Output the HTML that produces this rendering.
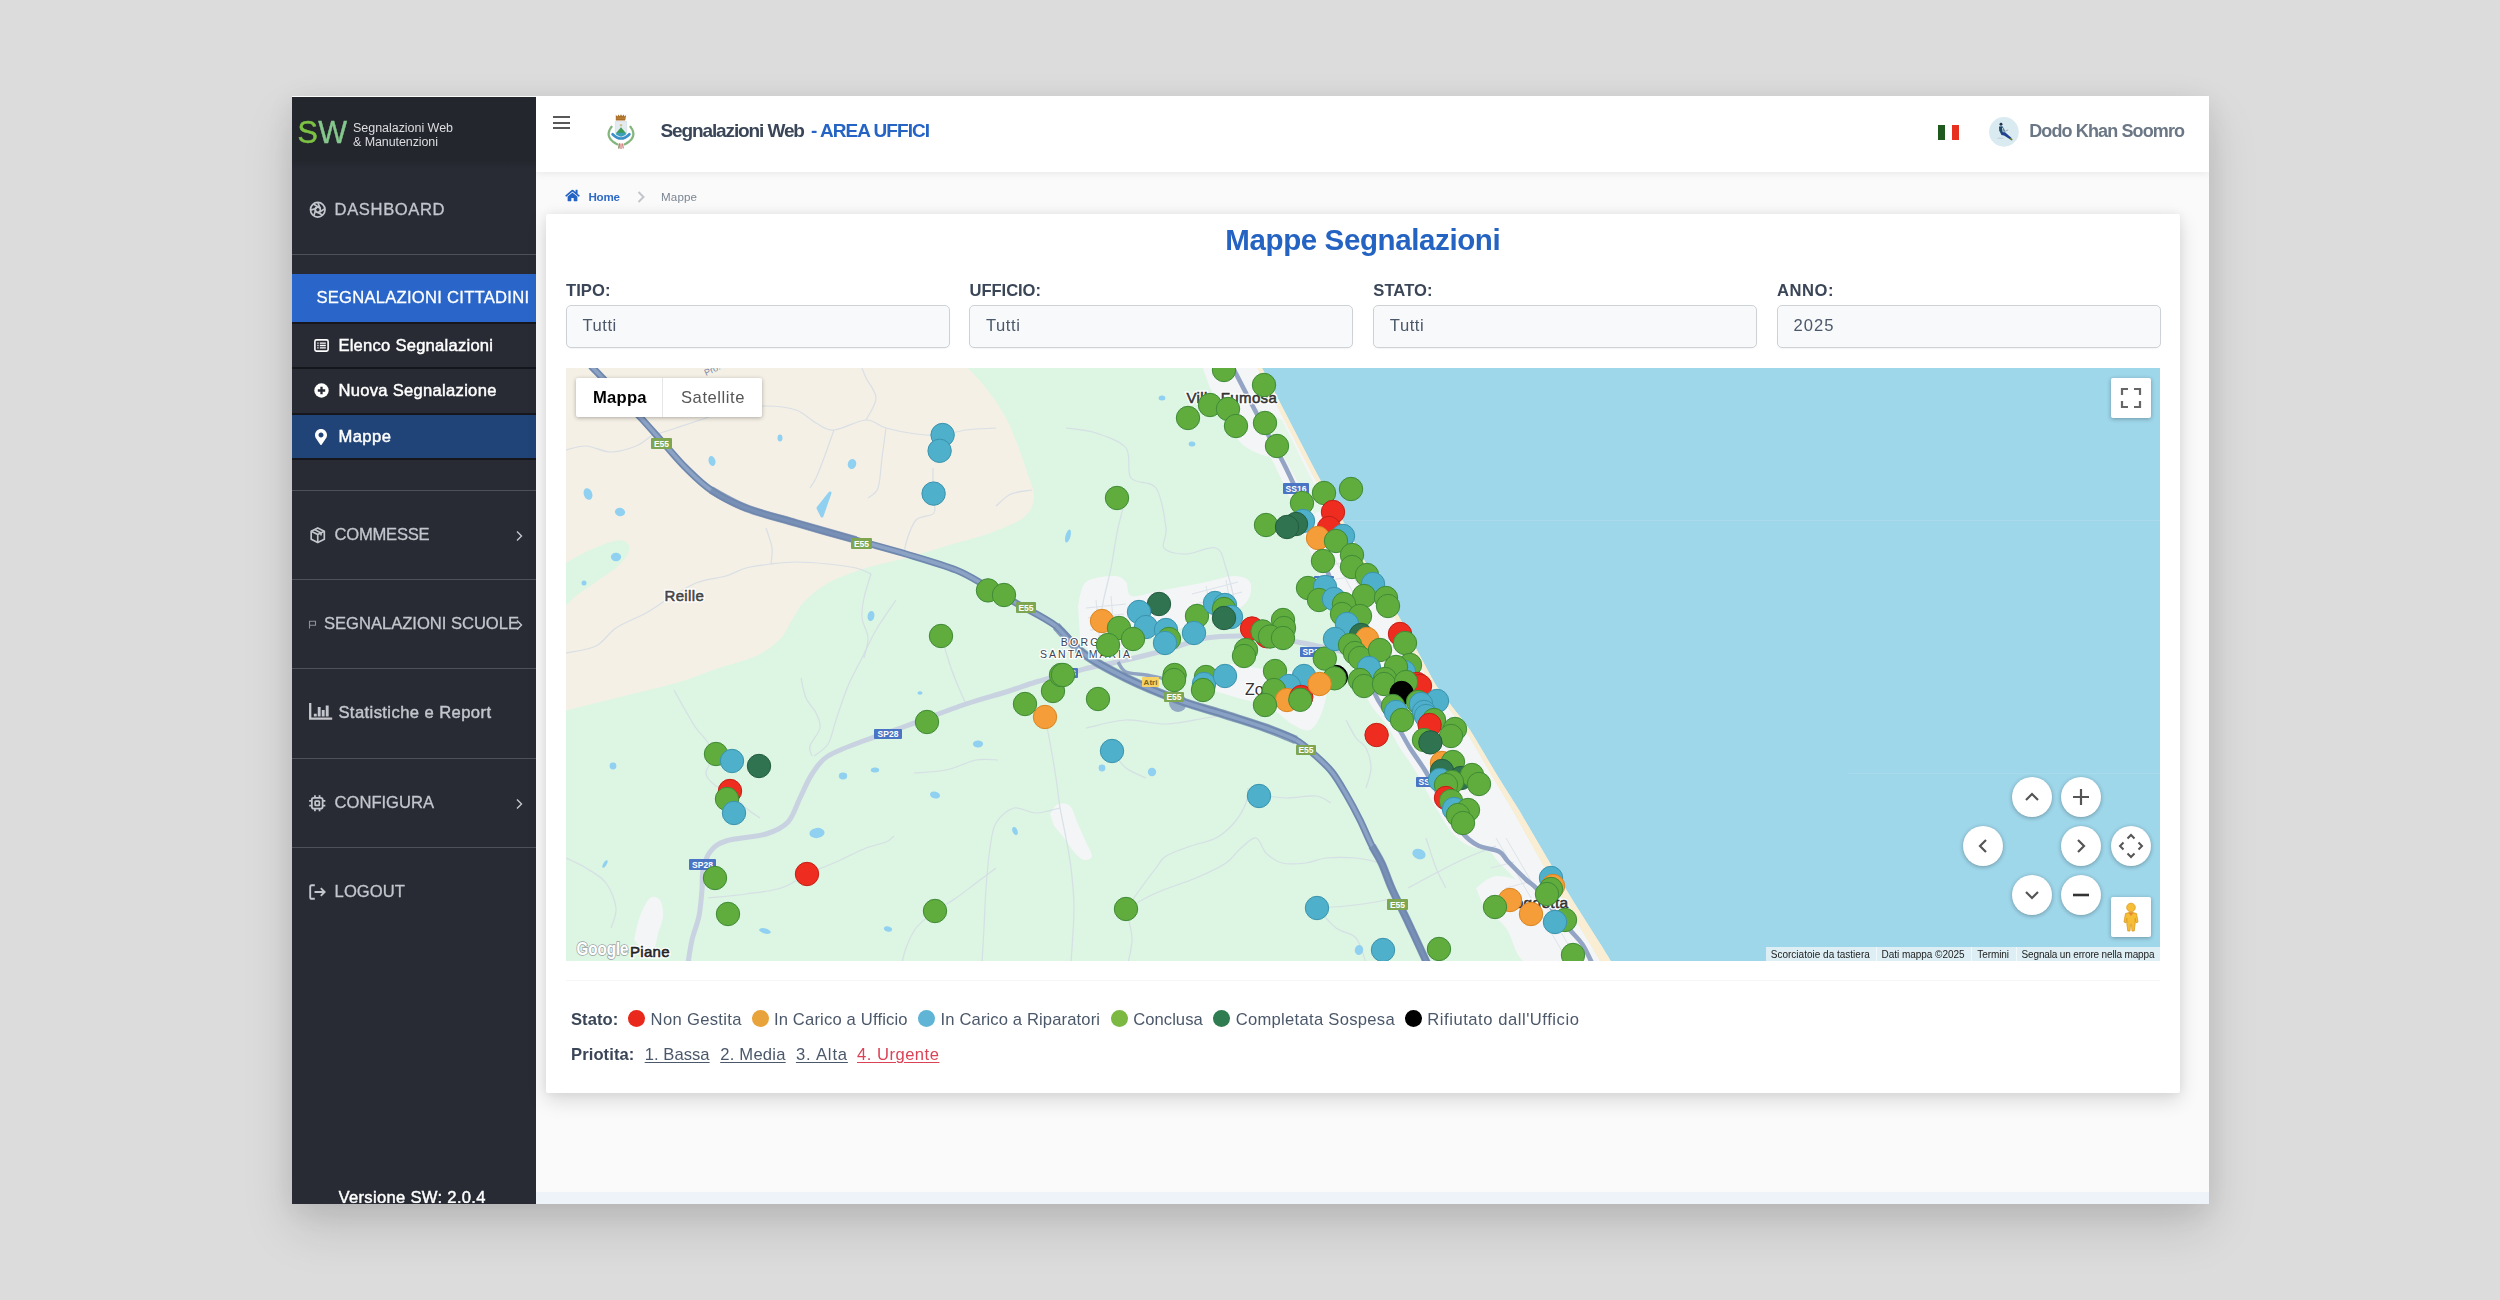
<!DOCTYPE html>
<html lang="it"><head><meta charset="utf-8"><title>Mappe Segnalazioni</title>
<style>
html,body{margin:0;padding:0}
body{width:2500px;height:1300px;overflow:hidden;background:#dcdcdc;font-family:"Liberation Sans",sans-serif;position:relative}
.a{position:absolute}
.t{position:absolute;white-space:pre;font-family:"Liberation Sans",sans-serif}
#win{left:292px;top:96px;width:1917px;height:1108px;background:#fafafa;box-shadow:0 24px 48px rgba(0,0,0,.135),0 6px 26px rgba(0,0,0,.075);overflow:hidden}
#side{left:0;top:1px;width:244px;height:1107px;background:#282b34}
#logo{left:0;top:0;width:244px;height:72px;background:linear-gradient(#24262e 0,#24262e 88%,#282b34 100%)}
.sep{left:0;width:244px;height:1px;background:#4e515a}
.dsep{left:0;width:244px;height:2px;background:#15171c}
#hdr{left:244px;top:0;width:1673px;height:76px;background:#fff;box-shadow:0 1px 8px rgba(0,0,0,.08)}
#card{left:254px;top:118px;width:1634px;height:879px;background:#fff;box-shadow:0 7px 20px rgba(0,0,0,.14),0 0 10px rgba(0,0,0,.06);border-radius:2px}
.inp{top:209px;width:382px;height:41px;background:#f8f9fa;border:1px solid #cdd2d7;border-radius:5px;box-shadow:0 1px 1px rgba(0,0,0,.04)}
#foot{left:244px;top:1096px;width:1673px;height:12px;background:#edf3f8}
.dot{position:absolute;width:17px;height:17px;border-radius:50%;top:1010px}
.u{text-decoration:underline;text-underline-offset:2px;text-decoration-thickness:1px}
.gbtn{position:absolute;width:40px;height:40px;border-radius:50%;background:#fff;box-shadow:0 1px 4px rgba(0,0,0,.3)}
.gbox{position:absolute;width:40px;height:40px;border-radius:2px;background:#fff;box-shadow:0 1px 4px rgba(0,0,0,.3)}
</style></head><body>
<div id="win" class="a">
  <div id="hdr" class="a"></div>
  <div id="side" class="a">
    <div id="logo" class="a"></div>
    <div class="a sep" style="top:157px"></div>
    <div class="a" style="left:0;top:177px;width:244px;height:49px;background:#2a66c9"></div>
    <div class="a dsep" style="top:225px"></div>
    <div class="a dsep" style="top:270px"></div>
    <div class="a dsep" style="top:316px"></div>
    <div class="a" style="left:0;top:318px;width:244px;height:44px;background:#214478"></div>
    <div class="a dsep" style="top:361px"></div>
    <div class="a sep" style="top:393px"></div>
    <div class="a sep" style="top:482px"></div>
    <div class="a sep" style="top:571px"></div>
    <div class="a sep" style="top:661px"></div>
    <div class="a sep" style="top:750px"></div>
  </div>
  <div id="card" class="a"></div>
  <div class="a inp" style="left:274px"></div>
  <div class="a inp" style="left:677px"></div>
  <div class="a inp" style="left:1081px"></div>
  <div class="a inp" style="left:1485px"></div>
  <div class="a" style="left:274px;top:884px;width:1594px;height:1px;background:#f5f6f7"></div>
  <div id="foot" class="a"></div>
</div>
<svg class="a" style="left:566px;top:368px" width="1594" height="593" viewBox="0 0 1594 593">
<rect width="1594" height="593" fill="#9ed6ea"/>
<path d="M695.0 -2.0 C699.5 6.7 712.8 32.3 722.0 50.0 C731.2 67.7 740.7 86.5 750.0 104.0 C759.3 121.5 769.8 140.1 778.0 155.0 C786.2 169.9 791.5 180.7 799.0 193.5 C806.5 206.3 817.2 222.5 823.0 232.0 C828.8 241.5 829.0 241.5 834.0 250.5 C839.0 259.5 847.1 275.0 853.0 286.0 C858.9 297.0 864.8 308.9 869.5 316.6 C874.2 324.3 875.2 324.4 881.0 332.0 C886.8 339.6 897.2 352.0 904.0 362.0 C910.8 372.0 916.8 383.4 922.0 392.0 C927.2 400.6 929.8 405.2 935.0 413.5 C940.2 421.8 948.8 435.2 953.0 442.0 C957.2 448.8 954.8 445.2 960.0 454.0 C965.2 462.8 975.8 481.3 984.0 495.0 C992.2 508.7 1000.5 522.3 1009.0 536.0 C1017.5 549.7 1028.8 567.2 1035.0 577.0 C1041.2 586.8 1044.2 592.0 1046.0 595.0 L-2 595 L-2 -2 Z" fill="#ddf5e3"/>
<path d="M400.0 -2.0 C403.3 1.7 413.3 11.3 420.0 20.0 C426.7 28.7 434.7 40.3 440.0 50.0 C445.3 59.7 448.5 69.0 452.0 78.0 C455.5 87.0 458.3 95.3 461.0 104.0 C463.7 112.7 468.7 122.3 468.0 130.0 C467.3 137.7 464.3 144.2 457.0 150.0 C449.7 155.8 436.8 160.3 424.0 165.0 C411.2 169.7 394.0 173.8 380.0 178.0 C366.0 182.2 353.3 186.3 340.0 190.0 C326.7 193.7 313.0 195.8 300.0 200.0 C287.0 204.2 272.3 209.3 262.0 215.0 C251.7 220.7 244.0 227.8 238.0 234.0 C232.0 240.2 230.0 245.8 226.0 252.0 C222.0 258.2 220.0 265.0 214.0 271.0 C208.0 277.0 200.7 283.0 190.0 288.0 C179.3 293.0 163.3 296.5 150.0 301.0 C136.7 305.5 126.7 310.2 110.0 315.0 C93.3 319.8 68.7 325.3 50.0 330.0 C31.3 334.7 6.7 340.8 -2.0 343.0 L-2 -2 Z" fill="#f5f0e6"/>
<path d="M-2.0 196.0 C2.0 193.8 13.7 186.8 22.0 183.0 C30.3 179.2 41.7 174.5 48.0 173.0 C54.3 171.5 57.5 172.3 60.0 174.0 C62.5 175.7 64.3 179.0 63.0 183.0 C61.7 187.0 57.5 192.8 52.0 198.0 C46.5 203.2 37.0 209.0 30.0 214.0 C23.0 219.0 15.3 223.7 10.0 228.0 C4.7 232.3 0.0 238.0 -2.0 240.0 Z" fill="#ddf5e3"/>
<path d="M656.0 -2.0 C660.5 6.7 674.0 33.0 683.0 50.0 C692.0 67.0 701.8 83.3 710.0 100.0 C718.2 116.7 725.3 133.3 732.0 150.0 C738.7 166.7 744.5 185.7 750.0 200.0 C755.5 214.3 760.0 222.7 765.0 236.0 C770.0 249.3 773.8 264.0 780.0 280.0 C786.2 296.0 795.3 319.3 802.0 332.0 C808.7 344.7 814.7 348.0 820.0 356.0 C825.3 364.0 829.0 372.0 834.0 380.0 C839.0 388.0 844.0 394.0 850.0 404.0 C856.0 414.0 863.9 429.8 870.0 440.0 C876.1 450.2 881.2 458.8 886.5 465.0 C891.8 471.2 895.9 474.4 902.0 477.5 C908.1 480.6 918.0 480.8 923.0 483.5 C928.0 486.2 927.5 488.8 932.0 493.5 C936.5 498.2 945.3 507.1 950.0 511.5 C954.7 515.9 955.3 514.8 960.0 520.0 C964.7 525.2 972.2 535.9 978.0 543.0 C983.8 550.1 989.8 556.9 994.5 562.5 C999.2 568.1 1002.9 571.1 1006.5 576.5 C1010.1 581.9 1014.4 591.9 1016.0 595.0 L1035.2 595.0 L1024.7 577.0 L999.8 536.0 L976.0 495.0 L953.1 454.0 L946.5 442.0 L929.3 413.5 L916.9 392.0 L899.2 362.0 L876.2 332.0 L864.7 316.6 L848.2 286.0 L829.2 250.5 L818.2 232.0 L794.2 193.5 L773.2 155.0 L745.2 104.0 L717.2 50.0 L690.2 -2.0 Z" fill="#f3f5f6"/>
<path d="M690.0 40.0 C693.7 46.3 704.5 64.7 712.0 78.0 C719.5 91.3 729.0 108.7 735.0 120.0 C741.0 131.3 745.8 141.7 748.0 146.0 L760 140 L742 104 L716 52 Z" fill="#ddf5e3" opacity=".75"/>
<path d="M636.0 -2.0 C641.3 -2.0 657.3 -12.3 668.0 -2.0 C678.7 8.3 692.7 45.7 700.0 60.0 C707.3 74.3 712.0 79.3 712.0 84.0 C712.0 88.7 706.0 89.3 700.0 88.0 C694.0 86.7 682.7 82.3 676.0 76.0 C669.3 69.7 665.3 59.3 660.0 50.0 C654.7 40.7 646.7 25.0 644.0 20.0 Z" fill="#f3f5f6" opacity="1"/>
<path d="M690.2 -2.0 C694.7 6.7 708.0 32.3 717.2 50.0 C726.4 67.7 735.9 86.5 745.2 104.0 C754.5 121.5 765.0 140.1 773.2 155.0 C781.4 169.9 786.7 180.7 794.2 193.5 C801.7 206.3 812.4 222.5 818.2 232.0 C824.0 241.5 824.2 241.5 829.2 250.5 C834.2 259.5 842.3 275.0 848.2 286.0 C854.1 297.0 860.0 308.9 864.7 316.6 C869.4 324.3 870.5 324.4 876.2 332.0 C882.0 339.6 892.4 352.0 899.2 362.0 C906.0 372.0 911.9 383.4 916.9 392.0 C921.9 400.6 924.3 405.2 929.3 413.5 C934.2 421.8 942.5 435.2 946.5 442.0 C950.4 448.8 948.2 445.2 953.1 454.0 C958.0 462.8 968.2 481.3 976.0 495.0 C983.8 508.7 991.7 522.3 999.8 536.0 C1007.9 549.7 1018.8 567.2 1024.7 577.0 C1030.6 586.8 1033.4 592.0 1035.2 595.0 L1046.0 595.0 L1035.0 577.0 L1009.0 536.0 L984.0 495.0 L960.0 454.0 L953.0 442.0 L935.0 413.5 L922.0 392.0 L904.0 362.0 L881.0 332.0 L869.5 316.6 L853.0 286.0 L834.0 250.5 L823.0 232.0 L799.0 193.5 L778.0 155.0 L750.0 104.0 L722.0 50.0 L695.0 -2.0 Z" fill="#f9edd3"/>
<path d="M512.0 238.0 C513.3 234.0 514.0 219.0 520.0 214.0 C526.0 209.0 541.3 208.0 548.0 208.0 C554.7 208.0 557.0 210.7 560.0 214.0 C563.0 217.3 559.7 226.7 566.0 228.0 C572.3 229.3 585.7 224.3 598.0 222.0 C610.3 219.7 628.3 216.3 640.0 214.0 C651.7 211.7 660.7 208.0 668.0 208.0 C675.3 208.0 681.7 210.0 684.0 214.0 C686.3 218.0 685.3 226.7 682.0 232.0 C678.7 237.3 671.0 242.7 664.0 246.0 C657.0 249.3 649.0 249.3 640.0 252.0 C631.0 254.7 619.3 259.0 610.0 262.0 C600.7 265.0 593.0 267.0 584.0 270.0 C575.0 273.0 565.3 277.3 556.0 280.0 C546.7 282.7 535.0 287.7 528.0 286.0 C521.0 284.3 516.3 272.7 514.0 270.0 Z" fill="#f3f5f6" opacity="1"/>
<path d="M640.0 300.0 C644.7 299.3 659.7 296.0 668.0 296.0 C676.3 296.0 677.7 298.3 690.0 300.0 C702.3 301.7 730.3 303.0 742.0 306.0 C753.7 309.0 757.7 311.7 760.0 318.0 C762.3 324.3 758.7 336.7 756.0 344.0 C753.3 351.3 749.0 360.0 744.0 362.0 C739.0 364.0 732.7 359.7 726.0 356.0 C719.3 352.3 713.0 344.3 704.0 340.0 C695.0 335.7 682.0 333.0 672.0 330.0 C662.0 327.0 648.7 323.3 644.0 322.0 Z" fill="#f3f5f6" opacity="1"/>
<path d="M68.0 572.0 C69.0 568.0 71.3 555.0 74.0 548.0 C76.7 541.0 80.7 532.7 84.0 530.0 C87.3 527.3 91.8 529.0 94.0 532.0 C96.2 535.0 97.3 542.3 97.0 548.0 C96.7 553.7 93.5 560.7 92.0 566.0 C90.5 571.3 90.7 577.3 88.0 580.0 C85.3 582.7 78.0 581.7 76.0 582.0 Z" fill="#f3f5f6" opacity="1"/>
<path d="M484.0 446.0 C485.3 444.3 488.7 437.3 492.0 436.0 C495.3 434.7 500.7 434.7 504.0 438.0 C507.3 441.3 509.3 450.0 512.0 456.0 C514.7 462.0 517.7 468.7 520.0 474.0 C522.3 479.3 526.3 485.0 526.0 488.0 C525.7 491.0 521.0 492.7 518.0 492.0 C515.0 491.3 511.3 487.7 508.0 484.0 C504.7 480.3 501.3 474.3 498.0 470.0 C494.7 465.7 489.7 460.0 488.0 458.0 Z" fill="#f3f5f6" opacity="1"/>
<path d="M910.0 520.0 C913.3 518.0 921.7 508.7 930.0 508.0 C938.3 507.3 950.8 510.7 960.0 516.0 C969.2 521.3 978.3 531.8 985.0 540.0 C991.7 548.2 995.8 555.8 1000.0 565.0 C1004.2 574.2 1016.7 590.0 1010.0 595.0 C1003.3 600.0 971.7 600.8 960.0 595.0 C948.3 589.2 947.0 569.2 940.0 560.0 C933.0 550.8 921.7 543.3 918.0 540.0 Z" fill="#f3f5f6" opacity="1"/>
<path d="M0.0 82.0 C3.3 81.3 12.5 77.7 20.0 78.0 C27.5 78.3 36.7 84.0 45.0 84.0 C53.3 84.0 63.3 80.7 70.0 78.0 C76.7 75.3 82.5 69.7 85.0 68.0" fill="none" stroke="#d3dce4" stroke-width="1.2" opacity=".85"/>
<path d="M85.0 68.0 C89.2 66.7 100.8 63.0 110.0 60.0 C119.2 57.0 131.7 53.0 140.0 50.0 C148.3 47.0 150.0 44.0 160.0 42.0 C170.0 40.0 188.3 38.0 200.0 38.0 C211.7 38.0 221.7 39.2 230.0 42.0 C238.3 44.8 243.7 51.7 250.0 55.0 C256.3 58.3 259.7 62.5 268.0 62.0 C276.3 61.5 291.3 52.3 300.0 52.0 C308.7 51.7 311.7 57.7 320.0 60.0 C328.3 62.3 340.7 64.8 350.0 66.0 C359.3 67.2 367.7 67.7 376.0 67.0 C384.3 66.3 391.0 63.2 400.0 62.0 C409.0 60.8 425.0 60.3 430.0 60.0" fill="none" stroke="#d3dce4" stroke-width="1.2" opacity=".85"/>
<path d="M300.0 52.0 C301.7 48.3 310.0 37.0 310.0 30.0 C310.0 23.0 302.3 15.0 300.0 10.0 C297.7 5.0 296.7 1.7 296.0 0.0" fill="none" stroke="#d3dce4" stroke-width="1.2" opacity=".85"/>
<path d="M268.0 62.0 C266.3 66.7 261.0 82.0 258.0 90.0 C255.0 98.0 252.3 105.0 250.0 110.0 C247.7 115.0 245.0 118.3 244.0 120.0" fill="none" stroke="#d3dce4" stroke-width="1.2" opacity=".85"/>
<path d="M320.0 60.0 C319.3 65.0 317.3 80.0 316.0 90.0 C314.7 100.0 314.3 113.3 312.0 120.0 C309.7 126.7 303.7 128.3 302.0 130.0" fill="none" stroke="#d3dce4" stroke-width="1.2" opacity=".85"/>
<path d="M367.0 100.0 C367.0 104.3 366.8 118.5 367.0 126.0 C367.2 133.5 370.8 140.7 368.0 145.0 C365.2 149.3 354.7 147.0 350.0 152.0 C345.3 157.0 342.0 168.7 340.0 175.0 C338.0 181.3 338.3 187.5 338.0 190.0" fill="none" stroke="#d3dce4" stroke-width="1.2" opacity=".85"/>
<path d="M430.0 138.0 C432.5 136.0 439.0 128.7 445.0 126.0 C451.0 123.3 462.5 122.7 466.0 122.0" fill="none" stroke="#d3dce4" stroke-width="1.2" opacity=".85"/>
<path d="M0.0 285.0 C5.0 283.8 21.7 282.2 30.0 278.0 C38.3 273.8 41.7 265.5 50.0 260.0 C58.3 254.5 71.7 249.7 80.0 245.0 C88.3 240.3 96.7 234.2 100.0 232.0" fill="none" stroke="#d3dce4" stroke-width="1.2" opacity=".85"/>
<path d="M100.0 232.0 C105.0 229.2 120.0 219.0 130.0 215.0 C140.0 211.0 151.7 210.5 160.0 208.0 C168.3 205.5 172.5 202.0 180.0 200.0 C187.5 198.0 196.7 197.0 205.0 196.0 C213.3 195.0 220.5 194.0 230.0 194.0 C239.5 194.0 252.0 195.0 262.0 196.0 C272.0 197.0 282.8 198.3 290.0 200.0 C297.2 201.7 302.5 205.0 305.0 206.0" fill="none" stroke="#d3dce4" stroke-width="1.2" opacity=".85"/>
<path d="M305.0 206.0 C303.8 210.0 299.5 222.7 298.0 230.0 C296.5 237.3 295.3 243.3 296.0 250.0 C296.7 256.7 301.7 263.3 302.0 270.0 C302.3 276.7 298.7 286.7 298.0 290.0" fill="none" stroke="#d3dce4" stroke-width="1.2" opacity=".85"/>
<path d="M200.0 160.0 C201.0 163.3 205.2 174.0 206.0 180.0 C206.8 186.0 205.2 193.3 205.0 196.0" fill="none" stroke="#d3dce4" stroke-width="1.2" opacity=".85"/>
<path d="M108.0 322.0 C109.7 325.0 114.3 333.7 118.0 340.0 C121.7 346.3 126.3 354.7 130.0 360.0 C133.7 365.3 136.7 367.7 140.0 372.0 C143.3 376.3 148.3 383.7 150.0 386.0" fill="none" stroke="#d3dce4" stroke-width="1.2" opacity=".85"/>
<path d="M150.0 386.0 C148.3 389.2 140.0 399.7 140.0 405.0 C140.0 410.3 146.0 415.0 150.0 418.0 C154.0 421.0 159.0 419.3 164.0 423.0 C169.0 426.7 175.0 435.5 180.0 440.0 C185.0 444.5 191.7 448.3 194.0 450.0" fill="none" stroke="#d3dce4" stroke-width="1.2" opacity=".85"/>
<path d="M235.0 310.0 C235.8 313.3 237.5 324.2 240.0 330.0 C242.5 335.8 247.7 340.0 250.0 345.0 C252.3 350.0 255.0 354.5 254.0 360.0 C253.0 365.5 245.3 373.3 244.0 378.0 C242.7 382.7 245.7 386.3 246.0 388.0" fill="none" stroke="#d3dce4" stroke-width="1.2" opacity=".85"/>
<path d="M330.0 232.0 C326.7 237.0 315.7 252.3 310.0 262.0 C304.3 271.7 300.7 280.7 296.0 290.0 C291.3 299.3 286.3 307.7 282.0 318.0 C277.7 328.3 273.3 342.3 270.0 352.0 C266.7 361.7 265.7 370.0 262.0 376.0 C258.3 382.0 250.3 386.0 248.0 388.0" fill="none" stroke="#d3dce4" stroke-width="1.2" opacity=".85"/>
<path d="M375.0 268.0 C376.7 273.3 381.7 290.5 385.0 300.0 C388.3 309.5 392.5 319.0 395.0 325.0 C397.5 331.0 399.2 334.2 400.0 336.0" fill="none" stroke="#d3dce4" stroke-width="1.2" opacity=".85"/>
<path d="M361.0 354.0 C363.8 352.5 371.5 348.0 378.0 345.0 C384.5 342.0 396.3 337.5 400.0 336.0" fill="none" stroke="#d3dce4" stroke-width="1.2" opacity=".85"/>
<path d="M348.0 405.0 C353.3 404.5 369.7 404.2 380.0 402.0 C390.3 399.8 401.3 393.7 410.0 392.0 C418.7 390.3 428.3 392.0 432.0 392.0" fill="none" stroke="#d3dce4" stroke-width="1.2" opacity=".85"/>
<path d="M479.0 349.0 C480.0 354.2 483.2 369.8 485.0 380.0 C486.8 390.2 488.5 400.0 490.0 410.0 C491.5 420.0 493.3 435.0 494.0 440.0" fill="none" stroke="#d3dce4" stroke-width="1.2" opacity=".85"/>
<path d="M494.0 440.0 C490.0 440.8 477.7 445.0 470.0 445.0 C462.3 445.0 454.7 438.3 448.0 440.0 C441.3 441.7 434.0 448.3 430.0 455.0 C426.0 461.7 425.7 469.2 424.0 480.0 C422.3 490.8 421.0 506.7 420.0 520.0 C419.0 533.3 418.7 547.5 418.0 560.0 C417.3 572.5 416.3 589.2 416.0 595.0" fill="none" stroke="#d3dce4" stroke-width="1.2" opacity=".85"/>
<path d="M494.0 440.0 C495.0 445.0 498.2 460.0 500.0 470.0 C501.8 480.0 503.7 488.3 505.0 500.0 C506.3 511.7 508.0 524.2 508.0 540.0 C508.0 555.8 505.5 585.8 505.0 595.0" fill="none" stroke="#d3dce4" stroke-width="1.2" opacity=".85"/>
<path d="M241.0 506.0 C245.8 504.0 260.2 498.3 270.0 494.0 C279.8 489.7 291.7 483.3 300.0 480.0 C308.3 476.7 315.3 476.0 320.0 474.0 C324.7 472.0 326.7 469.0 328.0 468.0" fill="none" stroke="#d3dce4" stroke-width="1.2" opacity=".85"/>
<path d="M142.0 530.0 C148.3 529.3 167.8 527.7 180.0 526.0 C192.2 524.3 204.8 523.3 215.0 520.0 C225.2 516.7 236.7 508.3 241.0 506.0" fill="none" stroke="#d3dce4" stroke-width="1.2" opacity=".85"/>
<path d="M0.0 490.0 C3.3 491.7 13.3 495.8 20.0 500.0 C26.7 504.2 35.0 508.3 40.0 515.0 C45.0 521.7 49.2 532.5 50.0 540.0 C50.8 547.5 45.8 556.7 45.0 560.0" fill="none" stroke="#d3dce4" stroke-width="1.2" opacity=".85"/>
<path d="M369.0 543.0 C365.8 545.8 354.8 553.8 350.0 560.0 C345.2 566.2 342.3 574.2 340.0 580.0 C337.7 585.8 336.7 592.5 336.0 595.0" fill="none" stroke="#d3dce4" stroke-width="1.2" opacity=".85"/>
<path d="M369.0 543.0 C372.5 540.8 383.2 534.7 390.0 530.0 C396.8 525.3 403.3 520.0 410.0 515.0 C416.7 510.0 426.7 502.5 430.0 500.0" fill="none" stroke="#d3dce4" stroke-width="1.2" opacity=".85"/>
<path d="M560.0 541.0 C562.5 537.5 570.0 526.8 575.0 520.0 C580.0 513.2 585.8 505.3 590.0 500.0 C594.2 494.7 594.2 491.7 600.0 488.0 C605.8 484.3 616.7 481.0 625.0 478.0 C633.3 475.0 642.8 473.8 650.0 470.0 C657.2 466.2 663.0 460.8 668.0 455.0 C673.0 449.2 677.7 440.8 680.0 435.0 C682.3 429.2 681.7 422.5 682.0 420.0" fill="none" stroke="#d3dce4" stroke-width="1.2" opacity=".85"/>
<path d="M560.0 541.0 C561.0 545.8 565.7 561.0 566.0 570.0 C566.3 579.0 562.7 590.8 562.0 595.0" fill="none" stroke="#d3dce4" stroke-width="1.2" opacity=".85"/>
<path d="M560.0 541.0 C565.0 538.3 578.3 530.2 590.0 525.0 C601.7 519.8 618.3 515.0 630.0 510.0 C641.7 505.0 652.5 500.0 660.0 495.0 C667.5 490.0 670.0 484.2 675.0 480.0 C680.0 475.8 685.8 469.2 690.0 470.0 C694.2 470.8 695.7 480.8 700.0 485.0 C704.3 489.2 709.3 493.3 716.0 495.0 C722.7 496.7 732.7 495.8 740.0 495.0 C747.3 494.2 751.7 490.8 760.0 490.0 C768.3 489.2 780.8 489.2 790.0 490.0 C799.2 490.8 810.8 494.2 815.0 495.0" fill="none" stroke="#d3dce4" stroke-width="1.2" opacity=".85"/>
<path d="M693.0 427.0 C697.5 427.5 710.5 429.8 720.0 430.0 C729.5 430.2 742.5 427.2 750.0 428.0 C757.5 428.8 762.5 433.8 765.0 435.0" fill="none" stroke="#d3dce4" stroke-width="1.2" opacity=".85"/>
<path d="M751.0 540.0 C755.8 539.7 770.2 539.0 780.0 538.0 C789.8 537.0 802.3 535.3 810.0 534.0 C817.7 532.7 823.3 530.7 826.0 530.0" fill="none" stroke="#d3dce4" stroke-width="1.2" opacity=".85"/>
<path d="M751.0 540.0 C754.2 543.3 763.5 555.0 770.0 560.0 C776.5 565.0 785.0 564.2 790.0 570.0 C795.0 575.8 798.3 590.8 800.0 595.0" fill="none" stroke="#d3dce4" stroke-width="1.2" opacity=".85"/>
<path d="M560.0 130.0 C558.7 135.0 554.5 148.3 552.0 160.0 C549.5 171.7 547.3 188.3 545.0 200.0 C542.7 211.7 539.8 221.3 538.0 230.0 C536.2 238.7 534.7 248.3 534.0 252.0" fill="none" stroke="#d3dce4" stroke-width="1.2" opacity=".85"/>
<path d="M500.0 60.0 C505.0 60.8 520.0 61.7 530.0 65.0 C540.0 68.3 554.2 72.5 560.0 80.0 C565.8 87.5 560.0 103.3 565.0 110.0 C570.0 116.7 584.2 111.7 590.0 120.0 C595.8 128.3 598.7 150.0 600.0 160.0 C601.3 170.0 594.7 175.7 598.0 180.0 C601.3 184.3 611.3 186.0 620.0 186.0 C628.7 186.0 643.3 177.7 650.0 180.0 C656.7 182.3 657.0 191.7 660.0 200.0 C663.0 208.3 666.7 225.0 668.0 230.0" fill="none" stroke="#d3dce4" stroke-width="1.2" opacity=".85"/>
<path d="M842.0 520.0 C846.7 517.5 860.3 510.0 870.0 505.0 C879.7 500.0 890.0 494.5 900.0 490.0 C910.0 485.5 925.0 480.0 930.0 478.0" fill="none" stroke="#d3dce4" stroke-width="1.2" opacity=".85"/>
<path d="M860.0 470.0 C861.7 475.0 866.7 491.7 870.0 500.0 C873.3 508.3 878.3 516.7 880.0 520.0" fill="none" stroke="#d3dce4" stroke-width="1.2" opacity=".85"/>
<path d="M546.0 383.0 C548.3 385.8 554.3 395.5 560.0 400.0 C565.7 404.5 576.7 408.3 580.0 410.0" fill="none" stroke="#d3dce4" stroke-width="1.2" opacity=".85"/>
<path d="M520.0 360.0 C526.7 358.7 546.7 352.7 560.0 352.0 C573.3 351.3 586.7 356.3 600.0 356.0 C613.3 355.7 630.0 351.5 640.0 350.0 C650.0 348.5 656.7 347.5 660.0 347.0" fill="none" stroke="#d3dce4" stroke-width="1.2" opacity=".85"/>
<path d="M780.0 352.0 C781.7 355.0 786.7 365.3 790.0 370.0 C793.3 374.7 797.5 375.0 800.0 380.0 C802.5 385.0 805.0 393.3 805.0 400.0 C805.0 406.7 800.8 416.7 800.0 420.0" fill="none" stroke="#d3dce4" stroke-width="1.2" opacity=".85"/>
<path d="M520.0 240.0 L560.0 236.0" stroke="#dde3ea" stroke-width="1" fill="none"/>
<path d="M522.0 250.0 L558.0 246.0" stroke="#dde3ea" stroke-width="1" fill="none"/>
<path d="M524.0 262.0 L556.0 258.0" stroke="#dde3ea" stroke-width="1" fill="none"/>
<path d="M530.0 232.0 L534.0 276.0" stroke="#dde3ea" stroke-width="1" fill="none"/>
<path d="M545.0 228.0 L549.0 274.0" stroke="#dde3ea" stroke-width="1" fill="none"/>
<path d="M626.0 226.0 L672.0 214.0" stroke="#dde3ea" stroke-width="1" fill="none"/>
<path d="M630.0 236.0 L676.0 224.0" stroke="#dde3ea" stroke-width="1" fill="none"/>
<path d="M640.0 218.0 L646.0 248.0" stroke="#dde3ea" stroke-width="1" fill="none"/>
<path d="M660.0 212.0 L666.0 244.0" stroke="#dde3ea" stroke-width="1" fill="none"/>
<path d="M752.0 160.0 L790.0 230.0" stroke="#dde3ea" stroke-width="1" fill="none"/>
<path d="M762.0 160.0 L800.0 232.0" stroke="#dde3ea" stroke-width="1" fill="none"/>
<path d="M744.0 170.0 L770.0 166.0" stroke="#dde3ea" stroke-width="1" fill="none"/>
<path d="M750.0 184.0 L776.0 180.0" stroke="#dde3ea" stroke-width="1" fill="none"/>
<path d="M756.0 198.0 L784.0 194.0" stroke="#dde3ea" stroke-width="1" fill="none"/>
<path d="M764.0 212.0 L790.0 208.0" stroke="#dde3ea" stroke-width="1" fill="none"/>
<path d="M930.0 470.0 L1000.0 590.0" stroke="#dde3ea" stroke-width="1" fill="none"/>
<path d="M940.0 470.0 L1010.0 590.0" stroke="#dde3ea" stroke-width="1" fill="none"/>
<path d="M925.0 500.0 L948.0 494.0" stroke="#dde3ea" stroke-width="1" fill="none"/>
<path d="M940.0 520.0 L962.0 514.0" stroke="#dde3ea" stroke-width="1" fill="none"/>
<path d="M952.0 540.0 L975.0 534.0" stroke="#dde3ea" stroke-width="1" fill="none"/>
<ellipse cx="22" cy="126" rx="4.2" ry="6.0" fill="#90d0f0" transform="rotate(-20 22 126)"/>
<ellipse cx="54" cy="144" rx="5.1" ry="4.2" fill="#90d0f0" transform="rotate(10 54 144)"/>
<ellipse cx="146" cy="93" rx="3.4" ry="5.1" fill="#90d0f0" transform="rotate(-15 146 93)"/>
<ellipse cx="214" cy="70" rx="2.5" ry="3.4" fill="#90d0f0" transform="rotate(0 214 70)"/>
<ellipse cx="286" cy="96" rx="4.2" ry="5.1" fill="#90d0f0" transform="rotate(20 286 96)"/>
<ellipse cx="50" cy="189" rx="5.1" ry="4.2" fill="#90d0f0" transform="rotate(0 50 189)"/>
<ellipse cx="18" cy="215" rx="2.5" ry="2.5" fill="#90d0f0" transform="rotate(0 18 215)"/>
<ellipse cx="305" cy="248" rx="3.4" ry="5.1" fill="#90d0f0" transform="rotate(10 305 248)"/>
<ellipse cx="412" cy="376" rx="5.1" ry="3.4" fill="#90d0f0" transform="rotate(0 412 376)"/>
<ellipse cx="277" cy="408" rx="4.2" ry="3.4" fill="#90d0f0" transform="rotate(0 277 408)"/>
<ellipse cx="309" cy="402" rx="4.2" ry="2.5" fill="#90d0f0" transform="rotate(0 309 402)"/>
<ellipse cx="369" cy="427" rx="5.1" ry="3.4" fill="#90d0f0" transform="rotate(15 369 427)"/>
<ellipse cx="251" cy="465" rx="7.6" ry="5.1" fill="#90d0f0" transform="rotate(-5 251 465)"/>
<ellipse cx="47" cy="398" rx="3.4" ry="3.4" fill="#90d0f0" transform="rotate(0 47 398)"/>
<ellipse cx="449" cy="463" rx="2.5" ry="4.2" fill="#90d0f0" transform="rotate(-20 449 463)"/>
<ellipse cx="354" cy="325" rx="2.5" ry="1.7" fill="#90d0f0" transform="rotate(0 354 325)"/>
<ellipse cx="596" cy="30" rx="3.4" ry="2.5" fill="#90d0f0" transform="rotate(0 596 30)"/>
<ellipse cx="626" cy="76" rx="3.4" ry="2.5" fill="#90d0f0" transform="rotate(10 626 76)"/>
<ellipse cx="502" cy="168" rx="2.5" ry="6.8" fill="#90d0f0" transform="rotate(15 502 168)"/>
<ellipse cx="536" cy="400" rx="3.4" ry="3.4" fill="#90d0f0" transform="rotate(0 536 400)"/>
<ellipse cx="586" cy="404" rx="4.2" ry="4.2" fill="#90d0f0" transform="rotate(0 586 404)"/>
<ellipse cx="853" cy="486" rx="6.8" ry="5.1" fill="#90d0f0" transform="rotate(20 853 486)"/>
<ellipse cx="793" cy="582" rx="4.2" ry="5.1" fill="#90d0f0" transform="rotate(10 793 582)"/>
<ellipse cx="322" cy="561" rx="4.2" ry="2.5" fill="#90d0f0" transform="rotate(15 322 561)"/>
<ellipse cx="199" cy="563" rx="6.0" ry="2.5" fill="#90d0f0" transform="rotate(15 199 563)"/>
<ellipse cx="39" cy="496" rx="1.7" ry="4.2" fill="#90d0f0" transform="rotate(30 39 496)"/>
<path d="M256 148 L264 125 L252 140 Z" fill="#90d0f0" stroke="#90d0f0" stroke-width="3" stroke-linejoin="round"/>
<path d="M522.0 300.0 C518.3 301.0 508.7 303.7 500.0 306.0 C491.3 308.3 480.0 311.0 470.0 314.0 C460.0 317.0 451.7 320.3 440.0 324.0 C428.3 327.7 416.7 330.3 400.0 336.0 C383.3 341.7 356.7 352.0 340.0 358.0 C323.3 364.0 313.0 367.0 300.0 372.0 C287.0 377.0 271.0 382.3 262.0 388.0 C253.0 393.7 250.7 399.0 246.0 406.0 C241.3 413.0 238.0 422.0 234.0 430.0 C230.0 438.0 227.7 448.0 222.0 454.0 C216.3 460.0 210.3 462.8 200.0 466.0 C189.7 469.2 169.3 470.0 160.0 473.0 C150.7 476.0 147.8 479.2 144.0 484.0 C140.2 488.8 138.3 495.7 137.0 502.0 C135.7 508.3 136.7 514.3 136.0 522.0 C135.3 529.7 134.7 539.7 133.0 548.0 C131.3 556.3 127.8 564.2 126.0 572.0 C124.2 579.8 122.7 591.2 122.0 595.0" fill="none" stroke="#c8d2e0" stroke-width="5" stroke-linecap="round"/>
<path d="M522.0 300.0 C528.3 298.7 547.0 295.0 560.0 292.0 C573.0 289.0 586.7 285.7 600.0 282.0 C613.3 278.3 626.7 272.3 640.0 270.0 C653.3 267.7 666.7 267.7 680.0 268.0 C693.3 268.3 705.0 269.7 720.0 272.0 C735.0 274.3 756.7 279.0 770.0 282.0 C783.3 285.0 795.0 288.7 800.0 290.0" fill="none" stroke="#c8d2e0" stroke-width="5"/>
<path d="M552.0 294.0 C553.3 295.7 555.3 301.8 560.0 304.0 C564.7 306.2 573.3 305.7 580.0 307.0 C586.7 308.3 594.7 308.8 600.0 312.0 C605.3 315.2 610.0 323.7 612.0 326.0" fill="none" stroke="#90a3c2" stroke-width="3.5"/>
<path d="M666.0 -2.0 C670.5 6.7 684.0 33.0 693.0 50.0 C702.0 67.0 711.8 83.3 720.0 100.0 C728.2 116.7 735.3 133.3 742.0 150.0 C748.7 166.7 754.5 185.7 760.0 200.0 C765.5 214.3 770.0 222.7 775.0 236.0 C780.0 249.3 783.8 264.0 790.0 280.0 C796.2 296.0 805.3 319.3 812.0 332.0 C818.7 344.7 824.7 348.0 830.0 356.0 C835.3 364.0 839.0 372.0 844.0 380.0 C849.0 388.0 854.0 394.0 860.0 404.0 C866.0 414.0 873.9 429.8 880.0 440.0 C886.1 450.2 891.2 458.8 896.5 465.0 C901.8 471.2 905.9 474.4 912.0 477.5 C918.1 480.6 928.0 480.8 933.0 483.5 C938.0 486.2 937.5 488.8 942.0 493.5 C946.5 498.2 955.3 507.1 960.0 511.5 C964.7 515.9 965.3 514.8 970.0 520.0 C974.7 525.2 982.2 535.9 988.0 543.0 C993.8 550.1 999.8 556.9 1004.5 562.5 C1009.2 568.1 1012.9 571.1 1016.5 576.5 C1020.1 581.9 1024.4 591.9 1026.0 595.0" fill="none" stroke="#93a4c4" stroke-width="4.6"/>
<circle cx="612" cy="335" r="9" fill="#7f97bb" opacity=".8"/>
<path d="M25.0 -2.0 C29.2 2.3 41.7 15.3 50.0 24.0 C58.3 32.7 66.7 41.0 75.0 50.0 C83.3 59.0 92.5 69.7 100.0 78.0 C107.5 86.3 112.5 92.7 120.0 100.0 C127.5 107.3 135.0 115.3 145.0 122.0 C155.0 128.7 165.8 134.5 180.0 140.0 C194.2 145.5 211.7 149.7 230.0 155.0 C248.3 160.3 271.7 166.8 290.0 172.0 C308.3 177.2 323.3 181.0 340.0 186.0 C356.7 191.0 376.7 196.7 390.0 202.0 C403.3 207.3 410.0 212.5 420.0 218.0 C430.0 223.5 438.3 228.3 450.0 235.0 C461.7 241.7 478.7 249.5 490.0 258.0 C501.3 266.5 506.3 277.3 518.0 286.0 C529.7 294.7 544.3 302.3 560.0 310.0 C575.7 317.7 595.3 325.8 612.0 332.0 C628.7 338.2 645.3 342.3 660.0 347.0 C674.7 351.7 688.3 355.8 700.0 360.0 C711.7 364.2 721.7 367.3 730.0 372.0 C738.3 376.7 744.0 382.7 750.0 388.0 C756.0 393.3 761.0 397.7 766.0 404.0 C771.0 410.3 775.3 418.0 780.0 426.0 C784.7 434.0 789.7 443.3 794.0 452.0 C798.3 460.7 802.3 470.7 806.0 478.0 C809.7 485.3 812.7 488.8 816.0 496.0 C819.3 503.2 821.7 511.3 826.0 521.0 C830.3 530.7 836.2 541.7 842.0 554.0 C847.8 566.3 857.8 588.2 861.0 595.0" fill="none" stroke="#6f88ae" stroke-width="7" stroke-linejoin="round"/>
<path d="M25.0 -2.0 C29.2 2.3 41.7 15.3 50.0 24.0 C58.3 32.7 66.7 41.0 75.0 50.0 C83.3 59.0 92.5 69.7 100.0 78.0 C107.5 86.3 112.5 92.7 120.0 100.0 C127.5 107.3 135.0 115.3 145.0 122.0 C155.0 128.7 165.8 134.5 180.0 140.0 C194.2 145.5 211.7 149.7 230.0 155.0 C248.3 160.3 271.7 166.8 290.0 172.0 C308.3 177.2 323.3 181.0 340.0 186.0 C356.7 191.0 376.7 196.7 390.0 202.0 C403.3 207.3 410.0 212.5 420.0 218.0 C430.0 223.5 438.3 228.3 450.0 235.0 C461.7 241.7 478.7 249.5 490.0 258.0 C501.3 266.5 506.3 277.3 518.0 286.0 C529.7 294.7 544.3 302.3 560.0 310.0 C575.7 317.7 595.3 325.8 612.0 332.0 C628.7 338.2 645.3 342.3 660.0 347.0 C674.7 351.7 688.3 355.8 700.0 360.0 C711.7 364.2 721.7 367.3 730.0 372.0 C738.3 376.7 744.0 382.7 750.0 388.0 C756.0 393.3 761.0 397.7 766.0 404.0 C771.0 410.3 775.3 418.0 780.0 426.0 C784.7 434.0 789.7 443.3 794.0 452.0 C798.3 460.7 802.3 470.7 806.0 478.0 C809.7 485.3 812.7 488.8 816.0 496.0 C819.3 503.2 821.7 511.3 826.0 521.0 C830.3 530.7 836.2 541.7 842.0 554.0 C847.8 566.3 857.8 588.2 861.0 595.0" fill="none" stroke="#8ca3c6" stroke-width="3.5" stroke-linejoin="round"/>
<path d="M145.0 122.0 C150.8 125.0 165.8 134.5 180.0 140.0 C194.2 145.5 211.7 149.7 230.0 155.0 C248.3 160.3 280.0 169.2 290.0 172.0" fill="none" stroke="#6f88ae" stroke-width="8" opacity=".7"/>
<path d="M806.0 478.0 C807.7 481.0 812.7 488.8 816.0 496.0 C819.3 503.2 821.7 511.3 826.0 521.0 C830.3 530.7 836.2 541.7 842.0 554.0 C847.8 566.3 857.8 588.2 861.0 595.0" fill="none" stroke="#6f88ae" stroke-width="8" opacity=".7"/>
<path d="M490.0 258.0 C494.7 262.7 506.3 277.3 518.0 286.0 C529.7 294.7 544.3 302.3 560.0 310.0 C575.7 317.7 595.3 325.8 612.0 332.0 C628.7 338.2 645.3 342.3 660.0 347.0 C674.7 351.7 688.3 355.8 700.0 360.0 C711.7 364.2 725.0 370.0 730.0 372.0" fill="none" stroke="#6f88ae" stroke-width="8.8" opacity=".8"/>
<path d="M490.0 258.0 C494.7 262.7 506.3 277.3 518.0 286.0 C529.7 294.7 544.3 302.3 560.0 310.0 C575.7 317.7 595.3 325.8 612.0 332.0 C628.7 338.2 645.3 342.3 660.0 347.0 C674.7 351.7 688.3 355.8 700.0 360.0 C711.7 364.2 725.0 370.0 730.0 372.0" fill="none" stroke="#8ca3c6" stroke-width="3.5" opacity=".9"/>
<rect x="85" y="70" width="21" height="11" rx="1" fill="#7ea650"/>
<text x="95.5" y="78.56" font-family="Liberation Sans, sans-serif" font-size="8.5" font-weight="700" fill="#fff" text-anchor="middle">E55</text>
<rect x="285" y="170" width="21" height="11" rx="1" fill="#7ea650"/>
<text x="295.5" y="178.56" font-family="Liberation Sans, sans-serif" font-size="8.5" font-weight="700" fill="#fff" text-anchor="middle">E55</text>
<rect x="450" y="234" width="20" height="11" rx="1" fill="#7ea650"/>
<text x="460.0" y="242.56" font-family="Liberation Sans, sans-serif" font-size="8.5" font-weight="700" fill="#fff" text-anchor="middle">E55</text>
<rect x="598" y="324" width="20" height="10" rx="1" fill="#7ea650"/>
<text x="608.0" y="332.06" font-family="Liberation Sans, sans-serif" font-size="8.5" font-weight="700" fill="#fff" text-anchor="middle">E55</text>
<rect x="730" y="377" width="20" height="10" rx="1" fill="#7ea650"/>
<text x="740.0" y="385.06" font-family="Liberation Sans, sans-serif" font-size="8.5" font-weight="700" fill="#fff" text-anchor="middle">E55</text>
<rect x="821" y="531" width="21" height="11" rx="1" fill="#7ea650"/>
<text x="831.5" y="539.56" font-family="Liberation Sans, sans-serif" font-size="8.5" font-weight="700" fill="#fff" text-anchor="middle">E55</text>
<rect x="576" y="309" width="17" height="10" rx="1" fill="#f7d366"/>
<text x="584.5" y="316.88" font-family="Liberation Sans, sans-serif" font-size="8" font-weight="700" fill="#7a6420" text-anchor="middle">Atri</text>
<rect x="717" y="115" width="26" height="11" rx="1" fill="#4a74c4"/>
<text x="730.0" y="123.56" font-family="Liberation Sans, sans-serif" font-size="8.5" font-weight="700" fill="#fff" text-anchor="middle">SS16</text>
<rect x="308" y="361" width="28" height="10" rx="1" fill="#4a74c4"/>
<text x="322.0" y="369.06" font-family="Liberation Sans, sans-serif" font-size="8.5" font-weight="700" fill="#fff" text-anchor="middle">SP28</text>
<rect x="123" y="491" width="27" height="11" rx="1" fill="#4a74c4"/>
<text x="136.5" y="499.56" font-family="Liberation Sans, sans-serif" font-size="8.5" font-weight="700" fill="#fff" text-anchor="middle">SP28</text>
<rect x="734" y="279" width="26" height="10" rx="1" fill="#4a74c4"/>
<text x="747.0" y="287.06" font-family="Liberation Sans, sans-serif" font-size="8.5" font-weight="700" fill="#fff" text-anchor="middle">SP28</text>
<rect x="498" y="300" width="14" height="10" rx="1" fill="#4a74c4"/>
<text x="505.0" y="308.06" font-family="Liberation Sans, sans-serif" font-size="8.5" font-weight="700" fill="#fff" text-anchor="middle">28</text>
<rect x="850" y="409" width="26" height="10" rx="1" fill="#4a74c4"/>
<text x="863.0" y="417.06" font-family="Liberation Sans, sans-serif" font-size="8.5" font-weight="700" fill="#fff" text-anchor="middle">SS16</text>
<rect x="748" y="208" width="20" height="9" rx="1" fill="#4a74c4"/>
<text x="758.0" y="215.56" font-family="Liberation Sans, sans-serif" font-size="8.5" font-weight="700" fill="#fff" text-anchor="middle">SS16</text>
<text x="98.5" y="233" font-family="Liberation Sans, sans-serif" font-size="15" letter-spacing="0.35" text-anchor="start" font-weight="400" fill="#fff" stroke="#fff" stroke-width="3">Reille</text>
<text x="98.5" y="233" font-family="Liberation Sans, sans-serif" font-size="15" letter-spacing="0.35" text-anchor="start" font-weight="400" fill="#444" stroke="#444" stroke-width=".55">Reille</text>
<text x="620.5" y="34.5" font-family="Liberation Sans, sans-serif" font-size="15" letter-spacing="0.35" text-anchor="start" font-weight="400" fill="#fff" stroke="#fff" stroke-width="3">Villa Fumosa</text>
<text x="620.5" y="34.5" font-family="Liberation Sans, sans-serif" font-size="15" letter-spacing="0.35" text-anchor="start" font-weight="400" fill="#333" stroke="#333" stroke-width=".55">Villa Fumosa</text>
<text x="64" y="588.5" font-family="Liberation Sans, sans-serif" font-size="15" letter-spacing="0.3" text-anchor="start" font-weight="400" fill="#fff" stroke="#fff" stroke-width="3">Piane</text>
<text x="64" y="588.5" font-family="Liberation Sans, sans-serif" font-size="15" letter-spacing="0.3" text-anchor="start" font-weight="400" fill="#222" stroke="#222" stroke-width=".55">Piane</text>
<text x="679" y="327" font-family="Liberation Sans, sans-serif" font-size="16" letter-spacing="0" text-anchor="start" font-weight="400" fill="#333" stroke="#fff" stroke-width="2.5" paint-order="stroke">Zo</text>
<text x="938" y="539.5" font-family="Liberation Sans, sans-serif" font-size="15.5" letter-spacing="0.3" text-anchor="start" font-weight="400" fill="#fff" stroke="#fff" stroke-width="3">Poggetta</text>
<text x="938" y="539.5" font-family="Liberation Sans, sans-serif" font-size="15.5" letter-spacing="0.3" text-anchor="start" font-weight="400" fill="#333" stroke="#333" stroke-width=".55">Poggetta</text>
<text x="520" y="278" font-family="Liberation Sans, sans-serif" font-size="10.5" letter-spacing="2.3" text-anchor="middle" font-weight="400" fill="#3c4352" stroke="#fff" stroke-width="2.5" paint-order="stroke">BORGO</text>
<text x="520" y="289.5" font-family="Liberation Sans, sans-serif" font-size="10.5" letter-spacing="2.0" text-anchor="middle" font-weight="400" fill="#3c4352" stroke="#fff" stroke-width="2.5" paint-order="stroke">SANTA MARIA</text>
<text x="140" y="8" font-family="Liberation Sans, sans-serif" font-size="9" fill="#7d8aa8" transform="rotate(-25 140 8)">Pro.</text>
<text x="10.5" y="586.5" textLength="52" lengthAdjust="spacingAndGlyphs" font-family="Liberation Sans, sans-serif" font-size="17.5" font-weight="700" fill="#fff" stroke="#98a1a6" stroke-width="1.5" paint-order="stroke">Google</text>
<rect x="779" y="152" width="815" height="1" fill="#fff" opacity=".13"/><rect x="1282" y="405" width="312" height="1" fill="#fff" opacity=".13"/>
<circle cx="376.6" cy="67" r="11.7" fill="#4eb0cb" stroke="#3a93ad" stroke-width="1"/>
<circle cx="373.6" cy="82.8" r="11.7" fill="#4eb0cb" stroke="#3a93ad" stroke-width="1"/>
<circle cx="367.6" cy="125.6" r="11.7" fill="#4eb0cb" stroke="#3a93ad" stroke-width="1"/>
<circle cx="422" cy="222.4" r="11.7" fill="#60ad3e" stroke="#3f8a36" stroke-width="1"/>
<circle cx="438" cy="227" r="11.7" fill="#60ad3e" stroke="#3f8a36" stroke-width="1"/>
<circle cx="375" cy="268" r="11.7" fill="#60ad3e" stroke="#3f8a36" stroke-width="1"/>
<circle cx="361" cy="354" r="11.7" fill="#60ad3e" stroke="#3f8a36" stroke-width="1"/>
<circle cx="459" cy="336" r="11.7" fill="#60ad3e" stroke="#3f8a36" stroke-width="1"/>
<circle cx="479" cy="349" r="11.7" fill="#f59d38" stroke="#d98522" stroke-width="1"/>
<circle cx="487" cy="323" r="11.7" fill="#60ad3e" stroke="#3f8a36" stroke-width="1"/>
<circle cx="495" cy="307" r="11.7" fill="#60ad3e" stroke="#3f8a36" stroke-width="1"/>
<circle cx="150" cy="386" r="11.7" fill="#60ad3e" stroke="#3f8a36" stroke-width="1"/>
<circle cx="166" cy="393" r="11.7" fill="#4eb0cb" stroke="#3a93ad" stroke-width="1"/>
<circle cx="193" cy="398" r="11.7" fill="#2f7350" stroke="#245c3f" stroke-width="1"/>
<circle cx="164" cy="423" r="11.7" fill="#ee2d20" stroke="#c41f15" stroke-width="1"/>
<circle cx="161" cy="431" r="11.7" fill="#60ad3e" stroke="#3f8a36" stroke-width="1"/>
<circle cx="168" cy="445" r="11.7" fill="#4eb0cb" stroke="#3a93ad" stroke-width="1"/>
<circle cx="149" cy="510" r="11.7" fill="#60ad3e" stroke="#3f8a36" stroke-width="1"/>
<circle cx="162" cy="546" r="11.7" fill="#60ad3e" stroke="#3f8a36" stroke-width="1"/>
<circle cx="241" cy="506" r="11.7" fill="#ee2d20" stroke="#c41f15" stroke-width="1"/>
<circle cx="369" cy="543" r="11.7" fill="#60ad3e" stroke="#3f8a36" stroke-width="1"/>
<circle cx="560" cy="541" r="11.7" fill="#60ad3e" stroke="#3f8a36" stroke-width="1"/>
<circle cx="751" cy="540" r="11.7" fill="#4eb0cb" stroke="#3a93ad" stroke-width="1"/>
<circle cx="817" cy="582" r="11.7" fill="#4eb0cb" stroke="#3a93ad" stroke-width="1"/>
<circle cx="873" cy="581" r="11.7" fill="#60ad3e" stroke="#3f8a36" stroke-width="1"/>
<circle cx="693" cy="428" r="11.7" fill="#4eb0cb" stroke="#3a93ad" stroke-width="1"/>
<circle cx="546" cy="383" r="11.7" fill="#4eb0cb" stroke="#3a93ad" stroke-width="1"/>
<circle cx="658" cy="2" r="11.7" fill="#60ad3e" stroke="#3f8a36" stroke-width="1"/>
<circle cx="698" cy="17" r="11.7" fill="#60ad3e" stroke="#3f8a36" stroke-width="1"/>
<circle cx="644" cy="37" r="11.7" fill="#60ad3e" stroke="#3f8a36" stroke-width="1"/>
<circle cx="662" cy="41" r="11.7" fill="#60ad3e" stroke="#3f8a36" stroke-width="1"/>
<circle cx="622" cy="50" r="11.7" fill="#60ad3e" stroke="#3f8a36" stroke-width="1"/>
<circle cx="699" cy="55" r="11.7" fill="#60ad3e" stroke="#3f8a36" stroke-width="1"/>
<circle cx="670" cy="58" r="11.7" fill="#60ad3e" stroke="#3f8a36" stroke-width="1"/>
<circle cx="711" cy="78" r="11.7" fill="#60ad3e" stroke="#3f8a36" stroke-width="1"/>
<circle cx="551" cy="130" r="11.7" fill="#60ad3e" stroke="#3f8a36" stroke-width="1"/>
<circle cx="785" cy="121" r="11.7" fill="#60ad3e" stroke="#3f8a36" stroke-width="1"/>
<circle cx="758" cy="125" r="11.7" fill="#60ad3e" stroke="#3f8a36" stroke-width="1"/>
<circle cx="736" cy="135" r="11.7" fill="#60ad3e" stroke="#3f8a36" stroke-width="1"/>
<circle cx="737" cy="153" r="11.7" fill="#4eb0cb" stroke="#3a93ad" stroke-width="1"/>
<circle cx="700" cy="157" r="11.7" fill="#60ad3e" stroke="#3f8a36" stroke-width="1"/>
<circle cx="730" cy="156" r="11.7" fill="#2f7350" stroke="#245c3f" stroke-width="1"/>
<circle cx="721" cy="159" r="11.7" fill="#2f7350" stroke="#245c3f" stroke-width="1"/>
<circle cx="767" cy="144" r="11.7" fill="#ee2d20" stroke="#c41f15" stroke-width="1"/>
<circle cx="763" cy="160" r="11.7" fill="#ee2d20" stroke="#c41f15" stroke-width="1"/>
<circle cx="777" cy="168" r="11.7" fill="#4eb0cb" stroke="#3a93ad" stroke-width="1"/>
<circle cx="752" cy="170" r="11.7" fill="#f59d38" stroke="#d98522" stroke-width="1"/>
<circle cx="770" cy="173" r="11.7" fill="#60ad3e" stroke="#3f8a36" stroke-width="1"/>
<circle cx="786" cy="187" r="11.7" fill="#60ad3e" stroke="#3f8a36" stroke-width="1"/>
<circle cx="757" cy="193" r="11.7" fill="#60ad3e" stroke="#3f8a36" stroke-width="1"/>
<circle cx="786" cy="199" r="11.7" fill="#60ad3e" stroke="#3f8a36" stroke-width="1"/>
<circle cx="801" cy="207" r="11.7" fill="#60ad3e" stroke="#3f8a36" stroke-width="1"/>
<circle cx="807" cy="216" r="11.7" fill="#4eb0cb" stroke="#3a93ad" stroke-width="1"/>
<circle cx="742" cy="220" r="11.7" fill="#60ad3e" stroke="#3f8a36" stroke-width="1"/>
<circle cx="759" cy="219" r="11.7" fill="#4eb0cb" stroke="#3a93ad" stroke-width="1"/>
<circle cx="753" cy="232" r="11.7" fill="#60ad3e" stroke="#3f8a36" stroke-width="1"/>
<circle cx="768" cy="231" r="11.7" fill="#4eb0cb" stroke="#3a93ad" stroke-width="1"/>
<circle cx="798" cy="228" r="11.7" fill="#60ad3e" stroke="#3f8a36" stroke-width="1"/>
<circle cx="820" cy="230" r="11.7" fill="#60ad3e" stroke="#3f8a36" stroke-width="1"/>
<circle cx="822" cy="238" r="11.7" fill="#60ad3e" stroke="#3f8a36" stroke-width="1"/>
<circle cx="778" cy="236" r="11.7" fill="#60ad3e" stroke="#3f8a36" stroke-width="1"/>
<circle cx="776" cy="246" r="11.7" fill="#60ad3e" stroke="#3f8a36" stroke-width="1"/>
<circle cx="794" cy="248" r="11.7" fill="#60ad3e" stroke="#3f8a36" stroke-width="1"/>
<circle cx="781" cy="256" r="11.7" fill="#4eb0cb" stroke="#3a93ad" stroke-width="1"/>
<circle cx="593" cy="236" r="11.7" fill="#2f7350" stroke="#245c3f" stroke-width="1"/>
<circle cx="573" cy="244" r="11.7" fill="#4eb0cb" stroke="#3a93ad" stroke-width="1"/>
<circle cx="536" cy="253" r="11.7" fill="#f59d38" stroke="#d98522" stroke-width="1"/>
<circle cx="553" cy="260" r="11.7" fill="#60ad3e" stroke="#3f8a36" stroke-width="1"/>
<circle cx="580" cy="259" r="11.7" fill="#4eb0cb" stroke="#3a93ad" stroke-width="1"/>
<circle cx="600" cy="262" r="11.7" fill="#4eb0cb" stroke="#3a93ad" stroke-width="1"/>
<circle cx="542" cy="277" r="11.7" fill="#60ad3e" stroke="#3f8a36" stroke-width="1"/>
<circle cx="567" cy="271" r="11.7" fill="#60ad3e" stroke="#3f8a36" stroke-width="1"/>
<circle cx="603" cy="271" r="11.7" fill="#60ad3e" stroke="#3f8a36" stroke-width="1"/>
<circle cx="599" cy="275" r="11.7" fill="#4eb0cb" stroke="#3a93ad" stroke-width="1"/>
<circle cx="631" cy="248" r="11.7" fill="#60ad3e" stroke="#3f8a36" stroke-width="1"/>
<circle cx="628" cy="265" r="11.7" fill="#4eb0cb" stroke="#3a93ad" stroke-width="1"/>
<circle cx="649" cy="235" r="11.7" fill="#4eb0cb" stroke="#3a93ad" stroke-width="1"/>
<circle cx="659" cy="237" r="11.7" fill="#4eb0cb" stroke="#3a93ad" stroke-width="1"/>
<circle cx="658" cy="241" r="11.7" fill="#60ad3e" stroke="#3f8a36" stroke-width="1"/>
<circle cx="665" cy="249" r="11.7" fill="#4eb0cb" stroke="#3a93ad" stroke-width="1"/>
<circle cx="658" cy="250" r="11.7" fill="#2f7350" stroke="#245c3f" stroke-width="1"/>
<circle cx="686" cy="260.5" r="11.7" fill="#ee2d20" stroke="#c41f15" stroke-width="1"/>
<circle cx="700.7" cy="268.2" r="11.7" fill="#ee2d20" stroke="#c41f15" stroke-width="1"/>
<circle cx="717" cy="252" r="11.7" fill="#60ad3e" stroke="#3f8a36" stroke-width="1"/>
<circle cx="718" cy="260" r="11.7" fill="#60ad3e" stroke="#3f8a36" stroke-width="1"/>
<circle cx="696.5" cy="263.4" r="11.7" fill="#60ad3e" stroke="#3f8a36" stroke-width="1"/>
<circle cx="704" cy="268.5" r="11.7" fill="#60ad3e" stroke="#3f8a36" stroke-width="1"/>
<circle cx="717" cy="270" r="11.7" fill="#60ad3e" stroke="#3f8a36" stroke-width="1"/>
<circle cx="680" cy="282" r="11.7" fill="#60ad3e" stroke="#3f8a36" stroke-width="1"/>
<circle cx="678" cy="288" r="11.7" fill="#60ad3e" stroke="#3f8a36" stroke-width="1"/>
<circle cx="709" cy="303" r="11.7" fill="#60ad3e" stroke="#3f8a36" stroke-width="1"/>
<circle cx="608.6" cy="307" r="11.7" fill="#60ad3e" stroke="#3f8a36" stroke-width="1"/>
<circle cx="608" cy="312" r="11.7" fill="#60ad3e" stroke="#3f8a36" stroke-width="1"/>
<circle cx="640" cy="309" r="11.7" fill="#60ad3e" stroke="#3f8a36" stroke-width="1"/>
<circle cx="638" cy="316" r="11.7" fill="#4eb0cb" stroke="#3a93ad" stroke-width="1"/>
<circle cx="637" cy="322" r="11.7" fill="#60ad3e" stroke="#3f8a36" stroke-width="1"/>
<circle cx="659" cy="308" r="11.7" fill="#4eb0cb" stroke="#3a93ad" stroke-width="1"/>
<circle cx="532" cy="331" r="11.7" fill="#60ad3e" stroke="#3f8a36" stroke-width="1"/>
<circle cx="497" cy="307" r="11.7" fill="#60ad3e" stroke="#3f8a36" stroke-width="1"/>
<circle cx="738" cy="308" r="11.7" fill="#4eb0cb" stroke="#3a93ad" stroke-width="1"/>
<circle cx="723" cy="318" r="11.7" fill="#4eb0cb" stroke="#3a93ad" stroke-width="1"/>
<circle cx="708" cy="322" r="11.7" fill="#60ad3e" stroke="#3f8a36" stroke-width="1"/>
<circle cx="721" cy="332" r="11.7" fill="#f59d38" stroke="#d98522" stroke-width="1"/>
<circle cx="735.3" cy="329" r="11.7" fill="#ee2d20" stroke="#c41f15" stroke-width="1"/>
<circle cx="734.3" cy="331.8" r="11.7" fill="#60ad3e" stroke="#3f8a36" stroke-width="1"/>
<circle cx="699" cy="337" r="11.7" fill="#60ad3e" stroke="#3f8a36" stroke-width="1"/>
<circle cx="769.9" cy="309" r="11.7" fill="#000" stroke="#000" stroke-width="1"/>
<circle cx="758.8" cy="290.6" r="11.7" fill="#60ad3e" stroke="#3f8a36" stroke-width="1"/>
<circle cx="768.5" cy="310.3" r="11.7" fill="#60ad3e" stroke="#3f8a36" stroke-width="1"/>
<circle cx="753.6" cy="316" r="11.7" fill="#f59d38" stroke="#d98522" stroke-width="1"/>
<circle cx="769" cy="271" r="11.7" fill="#4eb0cb" stroke="#3a93ad" stroke-width="1"/>
<circle cx="795" cy="267" r="11.7" fill="#2f7350" stroke="#245c3f" stroke-width="1"/>
<circle cx="801" cy="271" r="11.7" fill="#f59d38" stroke="#d98522" stroke-width="1"/>
<circle cx="784" cy="277" r="11.7" fill="#60ad3e" stroke="#3f8a36" stroke-width="1"/>
<circle cx="789" cy="285" r="11.7" fill="#60ad3e" stroke="#3f8a36" stroke-width="1"/>
<circle cx="794" cy="290" r="11.7" fill="#60ad3e" stroke="#3f8a36" stroke-width="1"/>
<circle cx="814" cy="282" r="11.7" fill="#60ad3e" stroke="#3f8a36" stroke-width="1"/>
<circle cx="803" cy="300" r="11.7" fill="#4eb0cb" stroke="#3a93ad" stroke-width="1"/>
<circle cx="834" cy="266" r="11.7" fill="#ee2d20" stroke="#c41f15" stroke-width="1"/>
<circle cx="839" cy="275" r="11.7" fill="#60ad3e" stroke="#3f8a36" stroke-width="1"/>
<circle cx="844" cy="297" r="11.7" fill="#60ad3e" stroke="#3f8a36" stroke-width="1"/>
<circle cx="838" cy="304" r="11.7" fill="#4eb0cb" stroke="#3a93ad" stroke-width="1"/>
<circle cx="830" cy="299" r="11.7" fill="#60ad3e" stroke="#3f8a36" stroke-width="1"/>
<circle cx="794" cy="312" r="11.7" fill="#60ad3e" stroke="#3f8a36" stroke-width="1"/>
<circle cx="798" cy="318" r="11.7" fill="#60ad3e" stroke="#3f8a36" stroke-width="1"/>
<circle cx="819" cy="311" r="11.7" fill="#60ad3e" stroke="#3f8a36" stroke-width="1"/>
<circle cx="818" cy="316" r="11.7" fill="#60ad3e" stroke="#3f8a36" stroke-width="1"/>
<circle cx="851" cy="316" r="11.7" fill="#ee2d20" stroke="#c41f15" stroke-width="1"/>
<circle cx="854" cy="318" r="11.7" fill="#ee2d20" stroke="#c41f15" stroke-width="1"/>
<circle cx="840" cy="314" r="11.7" fill="#60ad3e" stroke="#3f8a36" stroke-width="1"/>
<circle cx="835.6" cy="325" r="11.7" fill="#000" stroke="#000" stroke-width="1"/>
<circle cx="871" cy="333" r="11.7" fill="#4eb0cb" stroke="#3a93ad" stroke-width="1"/>
<circle cx="852" cy="334" r="11.7" fill="#60ad3e" stroke="#3f8a36" stroke-width="1"/>
<circle cx="855" cy="336" r="11.7" fill="#4eb0cb" stroke="#3a93ad" stroke-width="1"/>
<circle cx="827" cy="338" r="11.7" fill="#60ad3e" stroke="#3f8a36" stroke-width="1"/>
<circle cx="830" cy="344" r="11.7" fill="#4eb0cb" stroke="#3a93ad" stroke-width="1"/>
<circle cx="858" cy="344" r="11.7" fill="#4eb0cb" stroke="#3a93ad" stroke-width="1"/>
<circle cx="860" cy="348" r="11.7" fill="#4eb0cb" stroke="#3a93ad" stroke-width="1"/>
<circle cx="836" cy="352" r="11.7" fill="#60ad3e" stroke="#3f8a36" stroke-width="1"/>
<circle cx="868" cy="352" r="11.7" fill="#60ad3e" stroke="#3f8a36" stroke-width="1"/>
<circle cx="863.6" cy="357" r="11.7" fill="#ee2d20" stroke="#c41f15" stroke-width="1"/>
<circle cx="889" cy="361" r="11.7" fill="#60ad3e" stroke="#3f8a36" stroke-width="1"/>
<circle cx="885" cy="368" r="11.7" fill="#60ad3e" stroke="#3f8a36" stroke-width="1"/>
<circle cx="858" cy="372" r="11.7" fill="#60ad3e" stroke="#3f8a36" stroke-width="1"/>
<circle cx="864.4" cy="374.4" r="11.7" fill="#2f7350" stroke="#245c3f" stroke-width="1"/>
<circle cx="810.6" cy="367" r="11.7" fill="#ee2d20" stroke="#c41f15" stroke-width="1"/>
<circle cx="876" cy="395" r="11.7" fill="#f59d38" stroke="#d98522" stroke-width="1"/>
<circle cx="887" cy="394" r="11.7" fill="#60ad3e" stroke="#3f8a36" stroke-width="1"/>
<circle cx="876" cy="403" r="11.7" fill="#2f7350" stroke="#245c3f" stroke-width="1"/>
<circle cx="874" cy="412" r="11.7" fill="#4eb0cb" stroke="#3a93ad" stroke-width="1"/>
<circle cx="895" cy="410" r="11.7" fill="#2f7350" stroke="#245c3f" stroke-width="1"/>
<circle cx="906" cy="407" r="11.7" fill="#60ad3e" stroke="#3f8a36" stroke-width="1"/>
<circle cx="913" cy="416" r="11.7" fill="#60ad3e" stroke="#3f8a36" stroke-width="1"/>
<circle cx="886" cy="414" r="11.7" fill="#60ad3e" stroke="#3f8a36" stroke-width="1"/>
<circle cx="880" cy="417" r="11.7" fill="#60ad3e" stroke="#3f8a36" stroke-width="1"/>
<circle cx="880" cy="430" r="11.7" fill="#ee2d20" stroke="#c41f15" stroke-width="1"/>
<circle cx="885" cy="433" r="11.7" fill="#60ad3e" stroke="#3f8a36" stroke-width="1"/>
<circle cx="888" cy="441" r="11.7" fill="#4eb0cb" stroke="#3a93ad" stroke-width="1"/>
<circle cx="902" cy="442" r="11.7" fill="#60ad3e" stroke="#3f8a36" stroke-width="1"/>
<circle cx="892" cy="447" r="11.7" fill="#60ad3e" stroke="#3f8a36" stroke-width="1"/>
<circle cx="897" cy="455" r="11.7" fill="#60ad3e" stroke="#3f8a36" stroke-width="1"/>
<circle cx="985" cy="510" r="11.7" fill="#4eb0cb" stroke="#3a93ad" stroke-width="1"/>
<circle cx="987" cy="518" r="11.7" fill="#f59d38" stroke="#d98522" stroke-width="1"/>
<circle cx="985" cy="521" r="11.7" fill="#60ad3e" stroke="#3f8a36" stroke-width="1"/>
<circle cx="981" cy="526" r="11.7" fill="#60ad3e" stroke="#3f8a36" stroke-width="1"/>
<circle cx="944" cy="532" r="11.7" fill="#f59d38" stroke="#d98522" stroke-width="1"/>
<circle cx="929" cy="539" r="11.7" fill="#60ad3e" stroke="#3f8a36" stroke-width="1"/>
<circle cx="965" cy="546" r="11.7" fill="#f59d38" stroke="#d98522" stroke-width="1"/>
<circle cx="999" cy="552" r="11.7" fill="#60ad3e" stroke="#3f8a36" stroke-width="1"/>
<circle cx="989" cy="554" r="11.7" fill="#4eb0cb" stroke="#3a93ad" stroke-width="1"/>
<circle cx="1007" cy="587" r="11.7" fill="#60ad3e" stroke="#3f8a36" stroke-width="1"/>
</svg><!-- map type control -->
<div class="a" style="left:576px;top:378px;width:186px;height:39px;background:#fff;border-radius:2px;box-shadow:0 1px 4px rgba(0,0,0,.3)"></div>
<div class="a" style="left:662px;top:378px;width:1px;height:39px;background:#e6e6e6"></div>
<!-- fullscreen -->
<div class="gbox" style="left:2111px;top:378px">
<svg width="40" height="40" viewBox="0 0 40 40"><path d="M11 17v-6h6M23 11h6v6M29 23v6h-6M17 29h-6v-6" fill="none" stroke="#666" stroke-width="2.2"/></svg></div>
<!-- pan / zoom -->
<div class="gbtn" style="left:2012px;top:776.8px"><svg width="40" height="40"><path d="M14 23l6-6 6 6" fill="none" stroke="#555" stroke-width="2.2"/></svg></div>
<div class="gbtn" style="left:2061.4px;top:776.8px"><svg width="40" height="40"><path d="M12 20h16M20 12v16" fill="none" stroke="#555" stroke-width="2.2"/></svg></div>
<div class="gbtn" style="left:1962.5px;top:826.3px"><svg width="40" height="40"><path d="M23 14l-6 6 6 6" fill="none" stroke="#555" stroke-width="2.2"/></svg></div>
<div class="gbtn" style="left:2061.4px;top:826.3px"><svg width="40" height="40"><path d="M17 14l6 6-6 6" fill="none" stroke="#555" stroke-width="2.2"/></svg></div>
<div class="gbtn" style="left:2111px;top:826.3px"><svg width="40" height="40"><path d="M16.5 12.5l3.5-3.5 3.5 3.5M27.5 16.5l3.500 3.500-3.500 3.500M23.500 27.500l-3.500 3.500-3.500-3.500M12.500 23.500l-3.500-3.500 3.500-3.500" fill="none" stroke="#555" stroke-width="2"/></svg></div>
<div class="gbtn" style="left:2012px;top:875px"><svg width="40" height="40"><path d="M14 17l6 6 6-6" fill="none" stroke="#555" stroke-width="2.2"/></svg></div>
<div class="gbtn" style="left:2061.4px;top:875px"><svg width="40" height="40"><path d="M12 20h16" fill="none" stroke="#333" stroke-width="2.600"/></svg></div>
<!-- pegman -->
<div class="gbox" style="left:2111px;top:897px">
<svg width="40" height="40" viewBox="0 0 40 40"><g fill="#f6bd36" stroke="#d99a1e" stroke-width=".8"><circle cx="20" cy="10.500" r="4.300"/><path d="M14.500 16.500q5.500-2.500 11 0l1.500 8.500-2 .8-.8-4.500v5l-1 7.700h-2.200l-.5-6.500h-1l-.5 6.500h-2.200l-1-7.700v-5l-.8 4.500-2-.8z"/></g><path d="M17.500 15.700l2.500 3.300 2.500-3.300" fill="#e8873a"/></svg></div>
<!-- attribution -->
<div class="a" style="left:1766px;top:947px;width:394px;height:14px;background:rgba(245,248,250,.72)"></div>
<div class="a" style="left:1875.500px;top:947px;width:1px;height:14px;background:rgba(255,255,255,.6)"></div>
<div class="a" style="left:1970.500px;top:947px;width:1px;height:14px;background:rgba(255,255,255,.6)"></div>
<div class="a" style="left:2016px;top:947px;width:1px;height:14px;background:rgba(255,255,255,.6)"></div>
<!-- legend dots -->
<div class="dot" style="left:628.300px;background:#e8291c"></div>
<div class="dot" style="left:752px;background:#e8a33b"></div>
<div class="dot" style="left:918.200px;background:#60b4d5"></div>
<div class="dot" style="left:1110.900px;background:#7cb943"></div>
<div class="dot" style="left:1213.200px;background:#2e7c4f"></div>
<div class="dot" style="left:1405px;background:#000"></div>
<!-- hamburger -->
<div class="a" style="left:553px;top:116.400px;width:17px;height:2px;background:#585858"></div>
<div class="a" style="left:553px;top:121.700px;width:17px;height:2px;background:#585858"></div>
<div class="a" style="left:553px;top:127px;width:17px;height:2px;background:#585858"></div>
<!-- crest -->
<svg class="a" style="left:606px;top:113px" width="30" height="38" viewBox="0 0 30 38">
 <path d="M9.800 1.800l1.500 1.700 1.200-2 1.300 1.800 1.200-2.100 1.200 2.100 1.300-1.800 1.200 2 1.500-1.700-1 5.700h-9.400z" fill="#a9702c"/>
 <path d="M10.800 5.200h8.400" stroke="#c58a3a" stroke-width=".9"/>
 <path d="M5.600 13.800c-4.600 5.800-4.600 12.200 5.600 17.400M24.400 13.800c4.600 5.800 4.600 12.200-5.600 17.400" fill="none" stroke="#6fa865" stroke-width="2.300" stroke-linecap="round" stroke-dasharray="1.500 .8" opacity=".85"/>
 <path d="M9.300 8.500h11.400v11.500q0 2.500-5.700 4.200-5.700-1.700-5.700-4.200z" fill="#e3ebf1" stroke="#c9d5dd" stroke-width=".5"/>
 <circle cx="15" cy="12.200" r="1.200" fill="#c9c48a"/>
 <path d="M10.400 19.800l4.600-5.600 4.600 5.600v.8h-9.200z" fill="#3f9a55"/>
 <path d="M10.200 19.800h9.600v1.800q-2 1.600-4.800 2.200-2.800-.6-4.800-2.200z" fill="#3aa0b8"/>
 <path d="M6.600 21.200q8.400 8.600 16.800 0" fill="none" stroke="#3d8fc8" stroke-width="2.700" stroke-linecap="round"/>
 <path d="M13.400 30.500l-.6 5M15 30.500v5.500M16.600 30.500l.6 5" stroke-width="1.100" fill="none" stroke="#c96b6b"/>
 <path d="M13.400 30.500l-.6 5" stroke="#6aa865" stroke-width="1.100"/>
</svg>
<!-- breadcrumb home + chevron -->
<svg class="a" style="left:565px;top:189px" width="15" height="13" viewBox="0 0 576 512"><path fill="#2563c4" d="M280.400 148.300L96 300.100V464a16 16 0 0 0 16 16l112.100-.3a16 16 0 0 0 15.900-16V368a16 16 0 0 1 16-16h64a16 16 0 0 1 16 16v95.600a16 16 0 0 0 16 16.100L464 480a16 16 0 0 0 16-16V300L295.700 148.300a12.200 12.200 0 0 0-15.300 0zM571.600 251.500L488 182.600V44.100a12 12 0 0 0-12-12h-56a12 12 0 0 0-12 12v72.600L318.500 43a48 48 0 0 0-61 0L4.300 251.500a12 12 0 0 0-1.600 16.900l25.500 31a12 12 0 0 0 16.900 1.600l235.200-193.700a12.200 12.200 0 0 1 15.300 0L530.900 301a12 12 0 0 0 16.900-1.600l25.500-31a12 12 0 0 0-1.700-16.900z"/></svg>
<svg class="a" style="left:636px;top:190px" width="10" height="14"><path d="M2.500 2l5 5-5 5" fill="none" stroke="#c2c5ca" stroke-width="2"/></svg>
<!-- flag -->
<div class="a" style="left:1938px;top:124.500px;width:7px;height:15.500px;background:#1e5a1d"></div>
<div class="a" style="left:1945px;top:124.500px;width:7px;height:15.500px;background:#fff"></div>
<div class="a" style="left:1952px;top:124.500px;width:7px;height:15.500px;background:#e8301f"></div>
<!-- avatar -->
<svg class="a" style="left:1989px;top:116.700px" width="30" height="31" viewBox="0 0 30 31"><circle cx="14.900" cy="14.900" r="14.800" fill="#d9eaf1"/>
 <circle cx="12" cy="7.300" r="1.450" fill="#27324e"/>
 <path d="M10 9.400l3.400-.2 2.200 3.800-.4 4.400-3 .2-2-4.100z" fill="#1f4a6e"/>
 <path d="M13.600 10.800l.7 4.800" stroke="#e8eef6" stroke-width="1"/>
 <path d="M15.600 14.600l3.600-1.700" stroke="#a3adb0" stroke-width="1"/>
 <path d="M12.200 15.500l3.800-.3 6.600 5.800-1.200 1.600-6.400-4.200-2.600-.4z" fill="#1f3f8f"/>
 <ellipse cx="22.200" cy="22.200" rx="1.500" ry=".9" transform="rotate(35 22.200 22.200)" fill="#6b7a2a"/>
 <path d="M8.500 21.200h6" stroke="#b3c6d2" stroke-width=".8"/></svg>
<!-- sidebar icons -->
<!-- dashboard (aperture) -->
<svg class="a" style="left:308.500px;top:200.700px" width="17.500" height="17.500" viewBox="0 0 24 24" fill="none" stroke="#c3c6cc" stroke-width="2.300"><circle cx="12" cy="12" r="10"/><circle cx="12" cy="12" r="3.600"/><path d="M12 2l3.300 8M21.800 10.500l-7 4.500M19 19.500l-7.500-4M6.500 20.300l2.800-8M2.200 12.500l8.500-2.500M6 4l7.500 4.500"/></svg>
<!-- list-alt -->
<svg class="a" style="left:313.500px;top:338.500px" width="15" height="13" viewBox="0 0 15 13"><rect x=".9" y=".9" width="13.200" height="11.200" rx="1.500" fill="none" stroke="#fff" stroke-width="1.600"/><path d="M3.300 4.100h1.300M5.800 4.100h6M3.300 6.500h1.300M5.800 6.500h6M3.300 8.900h1.300M5.800 8.900h6" stroke="#fff" stroke-width="1.300"/></svg>
<!-- plus-circle -->
<svg class="a" style="left:313.500px;top:382.500px" width="15" height="15" viewBox="0 0 15 15"><circle cx="7.500" cy="7.500" r="7.200" fill="#fff"/><path d="M3.800 7.500h7.400M7.500 3.800v7.400" stroke="#282b34" stroke-width="2.300"/></svg>
<!-- map-marker -->
<svg class="a" style="left:315px;top:428.500px" width="12" height="16" viewBox="0 0 384 512"><path fill="#fff" d="M172.300 501.700C27 291 0 269.400 0 192 0 86 86 0 192 0s192 86 192 192c0 77.400-27 99-172.300 309.700-9.500 13.800-29.900 13.800-39.400 0zM192 272c44.200 0 80-35.800 80-80s-35.800-80-80-80-80 35.800-80 80 35.800 80 80 80z"/></svg>
<!-- box (commesse) -->
<svg class="a" style="left:308.500px;top:525.500px" width="17.500" height="18.500" viewBox="0 0 24 24" fill="none" stroke="#c3c6cc" stroke-width="2.300" stroke-linejoin="round"><path d="M12 2l9 4.500v11L12 22l-9-4.500v-11z"/><path d="M3 6.500l9 4.500 9-4.500M12 11v11M7.500 4.200l9 4.600v3.500"/></svg>
<svg class="a" style="left:515px;top:530px" width="9" height="12"><path d="M2 1.500l4.500 4.500-4.500 4.500" fill="none" stroke="#c6c8cd" stroke-width="1.400"/></svg>
<!-- small flag (scuole) -->
<svg class="a" style="left:307.500px;top:619.500px" width="9" height="9" viewBox="0 0 9 9"><path d="M1.500 1.200h6v4h-6z M1.500 1v7.500" fill="none" stroke="#8e9198" stroke-width="1.100"/></svg>
<svg class="a" style="left:515px;top:619px" width="9" height="12"><path d="M2 1.500l4.500 4.500-4.500 4.500" fill="none" stroke="#c6c8cd" stroke-width="1.400"/></svg>
<!-- bar chart -->
<svg class="a" style="left:309px;top:703.300px" width="24" height="17" viewBox="0 0 24 17"><path d="M1.200 0v15.600h22" fill="none" stroke="#c6c8cd" stroke-width="2.300"/><path d="M6.300 13.500v-2.800M10.200 13.500v-9.500M14.200 13.500v-6.500M18.200 13.500v-11" stroke="#c3c6cc" stroke-width="2.900"/></svg>
<!-- chip (configura) -->
<svg class="a" style="left:308px;top:793.500px" width="18.500" height="18.500" viewBox="0 0 24 24" fill="none" stroke="#c3c6cc" stroke-width="2.300"><rect x="5" y="5" width="14" height="14" rx="2.500"/><rect x="9.300" y="9.300" width="5.400" height="5.400" rx=".8"/><path d="M9 1.500v3.500M15 1.500v3.500M9 19v3.500M15 19v3.500M1.500 9h3.500M1.500 15h3.500M19 9h3.500M19 15h3.500"/></svg>
<svg class="a" style="left:515px;top:797.500px" width="9" height="12"><path d="M2 1.500l4.500 4.500-4.500 4.500" fill="none" stroke="#c6c8cd" stroke-width="1.400"/></svg>
<!-- logout -->
<svg class="a" style="left:309px;top:883.500px" width="17" height="16" viewBox="0 0 17 16" fill="none" stroke="#c3c6cc" stroke-width="1.900"><path d="M5.800 1.200h-3q-1.600 0-1.600 1.600v10.400q0 1.600 1.600 1.600h3"/><path d="M5.500 8h10M11.800 4.200l3.800 3.800-3.800 3.800"/></svg>
<div class="a" style="left:0;top:0;width:2500px;height:1300px;will-change:transform"><div class="t" style="left:297.6px;top:117.4px;font-size:30.5px;line-height:30.5px;font-weight:400;color:#7cc244;letter-spacing:0.000px;-webkit-text-stroke:.5px #7cc244">S</div>
<div class="t" style="left:318.3px;top:117.4px;font-size:30.5px;line-height:30.5px;font-weight:400;color:#86c88c;letter-spacing:0.000px;-webkit-text-stroke:.4px #86c88c">W</div>
<div class="t" style="left:353.0px;top:121.6px;font-size:12.5px;line-height:12.5px;font-weight:400;color:#dcdde1;letter-spacing:-0.035px;">Segnalazioni Web</div>
<div class="t" style="left:353.0px;top:135.6px;font-size:12.5px;line-height:12.5px;font-weight:400;color:#dcdde1;letter-spacing:-0.090px;">& Manutenzioni</div>
<div class="t" style="left:334.6px;top:201.5px;font-size:16.6px;line-height:16.6px;font-weight:400;color:#c3c6cc;letter-spacing:0.609px;-webkit-text-stroke:.3px">DASHBOARD</div>
<div class="t" style="left:316.4px;top:290.1px;font-size:16.6px;line-height:16.6px;font-weight:400;color:#fff;letter-spacing:0.260px;-webkit-text-stroke:.3px">SEGNALAZIONI CITTADINI</div>
<div class="t" style="left:338.4px;top:337.9px;font-size:16.6px;line-height:16.6px;font-weight:400;color:#fff;letter-spacing:0.235px;-webkit-text-stroke:.45px">Elenco Segnalazioni</div>
<div class="t" style="left:338.4px;top:382.9px;font-size:16.6px;line-height:16.6px;font-weight:400;color:#fff;letter-spacing:0.285px;-webkit-text-stroke:.45px">Nuova Segnalazione</div>
<div class="t" style="left:338.4px;top:428.5px;font-size:16.6px;line-height:16.6px;font-weight:400;color:#fff;letter-spacing:0.463px;-webkit-text-stroke:.45px">Mappe</div>
<div class="t" style="left:334.6px;top:526.9px;font-size:16.6px;line-height:16.6px;font-weight:400;color:#c3c6cc;letter-spacing:-0.259px;-webkit-text-stroke:.3px">COMMESSE</div>
<div class="t" style="left:324.0px;top:615.9px;font-size:16.6px;line-height:16.6px;font-weight:400;color:#c3c6cc;letter-spacing:-0.028px;-webkit-text-stroke:.3px">SEGNALAZIONI SCUOLE</div>
<div class="t" style="left:338.4px;top:704.5px;font-size:16.6px;line-height:16.6px;font-weight:400;color:#c3c6cc;letter-spacing:0.410px;-webkit-text-stroke:.45px">Statistiche e Report</div>
<div class="t" style="left:334.6px;top:794.5px;font-size:16.6px;line-height:16.6px;font-weight:400;color:#c3c6cc;letter-spacing:-0.020px;-webkit-text-stroke:.3px">CONFIGURA</div>
<div class="t" style="left:334.6px;top:883.9px;font-size:16.6px;line-height:16.6px;font-weight:400;color:#c3c6cc;letter-spacing:0.064px;-webkit-text-stroke:.3px">LOGOUT</div>
<div class="t" style="left:338.5px;top:1190.1px;font-size:16.6px;line-height:16.6px;font-weight:400;color:#fff;letter-spacing:0.309px;-webkit-text-stroke:.45px;clip-path:inset(0 0 3.5px 0)">Versione SW: 2.0.4</div>
<div class="t" style="left:660.4px;top:120.8px;font-size:19px;line-height:19px;font-weight:700;color:#3a4657;letter-spacing:-1.106px;">Segnalazioni Web</div>
<div class="t" style="left:811.0px;top:120.8px;font-size:19px;line-height:19px;font-weight:700;color:#2563c4;letter-spacing:-0.961px;">- AREA UFFICI</div>
<div class="t" style="left:2029.2px;top:122.2px;font-size:18px;line-height:18px;font-weight:700;color:#6b7785;letter-spacing:-0.873px;">Dodo Khan Soomro</div>
<div class="t" style="left:588.4px;top:190.8px;font-size:11.6px;line-height:11.6px;font-weight:700;color:#2f6ac6;letter-spacing:-0.206px;">Home</div>
<div class="t" style="left:661.0px;top:190.8px;font-size:11.6px;line-height:11.6px;font-weight:400;color:#7a8592;letter-spacing:0.137px;">Mappe</div>
<div class="t" style="left:1225.3px;top:225.4px;font-size:29.5px;line-height:29.5px;font-weight:700;color:#2463c2;letter-spacing:-0.385px;">Mappe Segnalazioni</div>
<div class="t" style="left:566.0px;top:282.7px;font-size:16.6px;line-height:16.6px;font-weight:700;color:#3a4657;letter-spacing:0.062px;">TIPO:</div>
<div class="t" style="left:969.5px;top:282.7px;font-size:16.6px;line-height:16.6px;font-weight:700;color:#3a4657;letter-spacing:-0.058px;">UFFICIO:</div>
<div class="t" style="left:1373.3px;top:282.7px;font-size:16.6px;line-height:16.6px;font-weight:700;color:#3a4657;letter-spacing:0.040px;">STATO:</div>
<div class="t" style="left:1777.0px;top:282.7px;font-size:16.6px;line-height:16.6px;font-weight:700;color:#3a4657;letter-spacing:0.527px;">ANNO:</div>
<div class="t" style="left:582.4px;top:317.7px;font-size:16.6px;line-height:16.6px;font-weight:400;color:#4b586a;letter-spacing:0.561px;">Tutti</div>
<div class="t" style="left:986.0px;top:317.7px;font-size:16.6px;line-height:16.6px;font-weight:400;color:#4b586a;letter-spacing:0.561px;">Tutti</div>
<div class="t" style="left:1389.8px;top:317.7px;font-size:16.6px;line-height:16.6px;font-weight:400;color:#4b586a;letter-spacing:0.561px;">Tutti</div>
<div class="t" style="left:1793.5px;top:317.7px;font-size:16.6px;line-height:16.6px;font-weight:400;color:#4b586a;letter-spacing:1.026px;">2025</div>
<div class="t" style="left:571.0px;top:1011.5px;font-size:16.6px;line-height:16.6px;font-weight:700;color:#3a4657;letter-spacing:0.057px;">Stato:</div>
<div class="t" style="left:650.6px;top:1011.5px;font-size:16.6px;line-height:16.6px;font-weight:400;color:#4b586a;letter-spacing:0.327px;">Non Gestita</div>
<div class="t" style="left:773.9px;top:1011.5px;font-size:16.6px;line-height:16.6px;font-weight:400;color:#4b586a;letter-spacing:0.169px;">In Carico a Ufficio</div>
<div class="t" style="left:940.6px;top:1011.5px;font-size:16.6px;line-height:16.6px;font-weight:400;color:#4b586a;letter-spacing:0.124px;">In Carico a Riparatori</div>
<div class="t" style="left:1133.3px;top:1011.5px;font-size:16.6px;line-height:16.6px;font-weight:400;color:#4b586a;letter-spacing:0.030px;">Conclusa</div>
<div class="t" style="left:1235.7px;top:1011.5px;font-size:16.6px;line-height:16.6px;font-weight:400;color:#4b586a;letter-spacing:0.291px;">Completata Sospesa</div>
<div class="t" style="left:1427.3px;top:1011.5px;font-size:16.6px;line-height:16.6px;font-weight:400;color:#4b586a;letter-spacing:0.538px;">Rifiutato dall'Ufficio</div>
<div class="t" style="left:571.0px;top:1046.9px;font-size:16.6px;line-height:16.6px;font-weight:700;color:#3a4657;letter-spacing:0.087px;">Priotita:</div>
<div class="t" style="left:644.7px;top:1046.9px;font-size:16.6px;line-height:16.6px;font-weight:400;color:#4b586a;letter-spacing:0.046px;"><span class="u">1. Bassa</span></div>
<div class="t" style="left:720.2px;top:1046.9px;font-size:16.6px;line-height:16.6px;font-weight:400;color:#4b586a;letter-spacing:0.235px;"><span class="u">2. Media</span></div>
<div class="t" style="left:795.9px;top:1046.9px;font-size:16.6px;line-height:16.6px;font-weight:400;color:#4b586a;letter-spacing:0.843px;"><span class="u">3. Alta</span></div>
<div class="t" style="left:857.0px;top:1046.9px;font-size:16.6px;line-height:16.6px;font-weight:400;color:#dc4256;letter-spacing:0.491px;"><span class="u">4. Urgente</span></div>
<div class="t" style="left:593.0px;top:390.0px;font-size:16.6px;line-height:16.6px;font-weight:700;color:#000;letter-spacing:0.259px;">Mappa</div>
<div class="t" style="left:681.0px;top:390.0px;font-size:16.6px;line-height:16.6px;font-weight:400;color:#565656;letter-spacing:0.544px;">Satellite</div>
<div class="t" style="left:1770.8px;top:949.7px;font-size:10px;line-height:10px;font-weight:400;color:#222;letter-spacing:0.002px;">Scorciatoie da tastiera</div>
<div class="t" style="left:1881.5px;top:949.7px;font-size:10px;line-height:10px;font-weight:400;color:#222;letter-spacing:-0.029px;">Dati mappa ©2025</div>
<div class="t" style="left:1977.2px;top:949.7px;font-size:10px;line-height:10px;font-weight:400;color:#222;letter-spacing:-0.056px;">Termini</div>
<div class="t" style="left:2021.6px;top:949.7px;font-size:10px;line-height:10px;font-weight:400;color:#222;letter-spacing:-0.158px;">Segnala un errore nella mappa</div></div>
</body></html>
